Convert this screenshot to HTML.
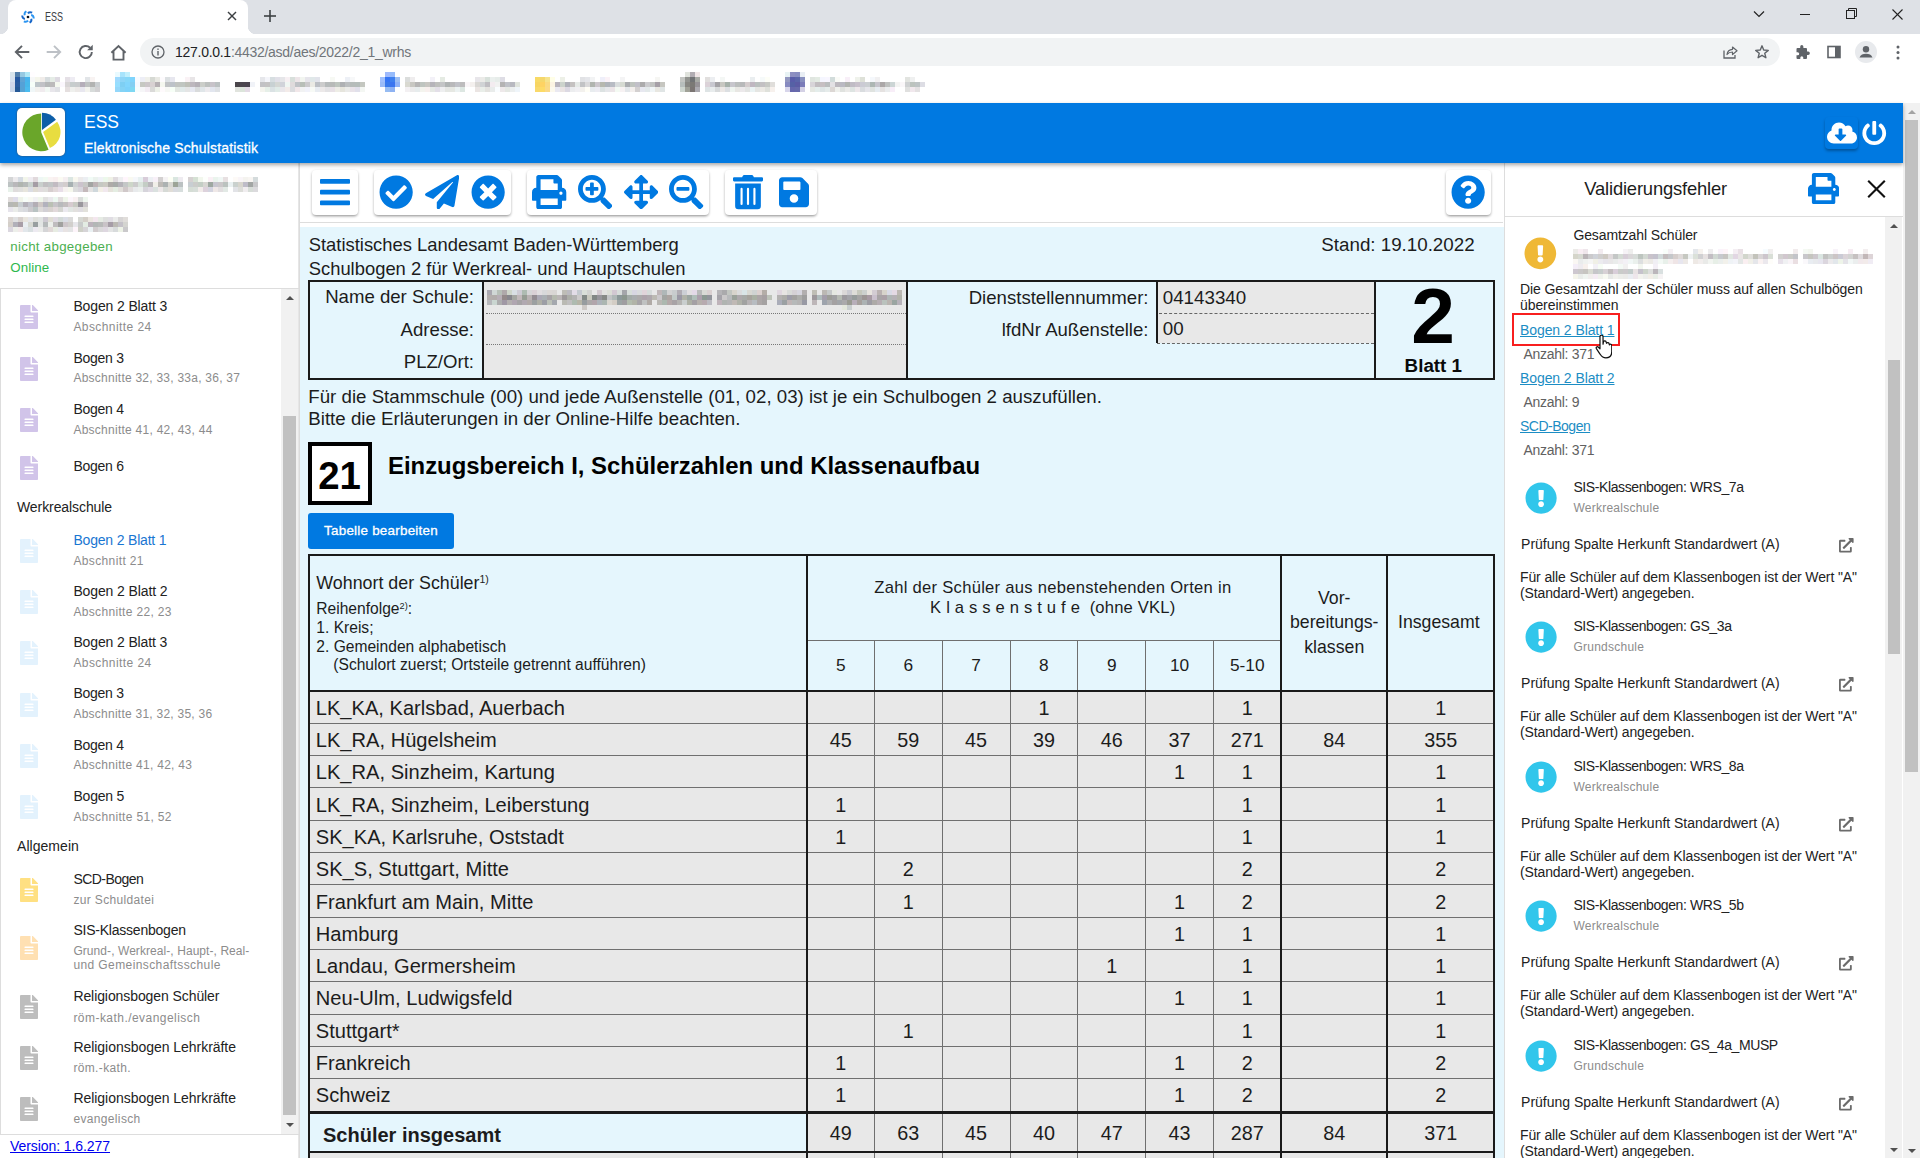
<!DOCTYPE html>
<html lang="de">
<head>
<meta charset="utf-8">
<title>ESS</title>
<style>
*{box-sizing:border-box;margin:0;padding:0}
html,body{width:1920px;height:1158px;overflow:hidden;background:#fff;font-family:"Liberation Sans",sans-serif;color:#111}
.abs{position:absolute}
svg{display:block}
/* ---------- browser chrome ---------- */
#tabstrip{left:0;top:0;width:1920px;height:34px;background:#dee1e6}
#tab{left:8px;top:0;width:240px;height:34px;background:#fff;border-radius:8px 8px 0 0}
#tab:before,#tab:after{content:"";position:absolute;bottom:0;width:8px;height:8px;background:radial-gradient(circle at 0 0,#dee1e6 8px,#fff 8.5px)}
#tab:before{left:-8px}
#tab:after{right:-8px;background:radial-gradient(circle at 100% 0,#dee1e6 8px,#fff 8.5px)}
#tabtitle{left:44.6px;top:10px;font-size:12px;color:#3c4043;transform:scaleX(.75);transform-origin:0 0}
#toolbar{left:0;top:34px;width:1920px;height:36px;background:#fff}
#urlpill{left:140px;top:38px;width:1640px;height:28px;border-radius:14px;background:#f1f3f4}
#url{left:175px;top:44px;font-size:14px;color:#70757a;white-space:nowrap;letter-spacing:-.28px}
#url b{font-weight:400;color:#202124}
#bookmarks{left:0;top:70px;width:1920px;height:33px;background:#fff}
.bm{position:absolute;top:78px;height:14px;filter:blur(1.6px);border-radius:2px}
/* ---------- app header ---------- */
#appbar{left:0;top:103px;width:1903px;height:60px;background:#0079e1;box-shadow:0 2px 4px rgba(0,0,0,.35);z-index:5}
#logo{left:17px;top:5px;width:48px;height:48px;background:#fff;border-radius:5px;box-shadow:0 0 2px rgba(90,60,40,.8)}
#apptitle{left:84px;top:9px;font-size:17.5px;color:#fff;white-space:nowrap}
#appsub{left:84px;top:36.5px;font-size:14px;color:#fff;white-space:nowrap;-webkit-text-stroke:.3px #fff;letter-spacing:.16px}
/* ---------- page scrollbar ---------- */
#pscroll{left:1903px;top:103px;width:17px;height:1055px;background:#f1f1f1}
#pscroll .thumb{left:2px;top:17px;width:13px;height:652px;background:#c1c1c1}
.arr{position:absolute;width:0;height:0;border-left:4px solid transparent;border-right:4px solid transparent}
.arr.up{border-bottom:4px solid #505050}
.arr.dn{border-top:4px solid #505050}
/* ---------- left sidebar ---------- */
#side{left:0;top:163px;width:300px;height:995px;background:#fff;border-right:1px solid #dcdcdc;box-shadow:inset -1px 0 0 #e6e6e6}
/* ---------- main ---------- */
#main{left:300px;top:163px;width:1204px;height:995px;background:#fff}
#form{left:0;top:64px;width:1204px;height:931px;background:#e5f6fd}
/* ---------- right panel ---------- */
#right{left:1504px;top:163px;width:399px;height:995px;background:#fff;border-left:1px solid #ddd}

#form .t{position:absolute;white-space:nowrap;color:#1c1c1c}
#form .b{font-weight:700}
.fld{background:#e8e8e8}
.dot{height:0;border-top:1px dotted #777}
.dash{height:0;border-top:1px dashed #666}
.blurtxt{filter:blur(2.2px);color:#555;white-space:nowrap;overflow:hidden}
.btn{background:#0079e1;color:#fff;border-radius:3px;font-size:13.4px;line-height:36px;text-align:center;-webkit-text-stroke:.3px #fff;letter-spacing:.24px}
.hl{height:1px;background:#6f6f6f}
.vl{width:1px;background:#6f6f6f}
.vk{width:2px;background:#1a1a1a}
.hk{background:#1a1a1a}
.sup{position:relative}

#side .st{position:absolute;white-space:nowrap;color:#222}
#side .sub{color:#8c8c8c}
.sblur{font-size:14px;line-height:18px;height:18px;color:#555;filter:blur(2.4px);white-space:nowrap;overflow:hidden}

#right{overflow:hidden}
#right .rt{position:absolute;white-space:nowrap;color:#222}
#right .lnk{color:#1c8dc4;text-decoration:underline}
.rblur{font-size:12px;line-height:14px;height:14px;color:#777;filter:blur(2.2px);white-space:nowrap;overflow:hidden}

.bmt{position:absolute;top:77px;height:15px;font-size:12px;line-height:15px;color:#555;filter:blur(2px);white-space:nowrap;overflow:hidden}
.tbtn{background:#fff;border-radius:4px;box-shadow:0 2px 3px -1px rgba(0,0,0,.3),0 1px 3px rgba(0,0,0,.2)}
</style>
</head>
<body>
<!-- BROWSER CHROME -->
<div id="tabstrip" class="abs"></div>
<div id="tab" class="abs"></div>
<div id="tabtitle" class="abs">ESS</div>
<div id="toolbar" class="abs"></div>
<div id="urlpill" class="abs"></div>
<div id="url" class="abs"><b>127.0.0.1</b>:4432/asd/aes/2022/2_1_wrhs</div>
<div id="bookmarks" class="abs"></div>
<svg class="abs" style="left:21px;top:10.1px" width="14" height="14" viewBox="0 0 14 14"><path d="M6.87 3.30Q8.50 1.40 11.17 2.68" fill="none" stroke="#1565c8" stroke-width="1.9"/><path d="M10.14 5.04Q12.60 5.50 12.82 8.45" fill="none" stroke="#2b95f2" stroke-width="1.9"/><path d="M10.27 8.74Q11.10 11.10 8.65 12.77" fill="none" stroke="#1565c8" stroke-width="1.9"/><path d="M7.13 10.70Q5.50 12.60 2.83 11.32" fill="none" stroke="#2b95f2" stroke-width="1.9"/><path d="M3.86 8.96Q1.40 8.50 1.18 5.55" fill="none" stroke="#1565c8" stroke-width="1.9"/><path d="M3.73 5.26Q2.90 2.90 5.35 1.23" fill="none" stroke="#2b95f2" stroke-width="1.9"/><circle cx="7" cy="7" r="1.35" fill="#0a1420"/></svg>
<svg class="abs" style="left:227px;top:11px" width="10" height="10" viewBox="0 0 10 10"><line x1="1" y1="1" x2="9" y2="9" stroke="#3c4043" stroke-width="1.4"/><line x1="9" y1="1" x2="1" y2="9" stroke="#3c4043" stroke-width="1.4"/></svg>
<svg class="abs" style="left:263px;top:9px" width="14" height="14" viewBox="0 0 14 14"><line x1="7" y1="1" x2="7" y2="13" stroke="#3c4043" stroke-width="1.6"/><line x1="1" y1="7" x2="13" y2="7" stroke="#3c4043" stroke-width="1.6"/></svg>
<svg class="abs" style="left:1753px;top:9px" width="12" height="10" viewBox="0 0 12 10"><polyline points="1,2.5 6,7.5 11,2.5" fill="none" stroke="#222" stroke-width="1.2"/></svg>
<svg class="abs" style="left:1800px;top:9px" width="10" height="10" viewBox="0 0 10 10"><line x1="0" y1="5.5" x2="10" y2="5.5" stroke="#222" stroke-width="1"/></svg>
<svg class="abs" style="left:1846px;top:8px" width="11" height="11" viewBox="0 0 11 11"><rect x="0.5" y="2.5" width="8" height="8" fill="none" stroke="#222"/><polyline points="2.5,2.5 2.5,0.5 10.5,0.5 10.5,8.5 8.5,8.5" fill="none" stroke="#222"/></svg>
<svg class="abs" style="left:1892px;top:9px" width="11" height="11" viewBox="0 0 11 11"><line x1="0.5" y1="0.5" x2="10.5" y2="10.5" stroke="#222" stroke-width="1.1"/><line x1="10.5" y1="0.5" x2="0.5" y2="10.5" stroke="#222" stroke-width="1.1"/></svg>
<svg class="abs" style="left:13px;top:43px" width="18" height="18" viewBox="0 0 16 16"><path d="M14.5 8H2.5M8 2.5L2.5 8 8 13.500" fill="none" stroke="#5f6368" stroke-width="1.7"/></svg>
<svg class="abs" style="left:45px;top:43px" width="18" height="18" viewBox="0 0 16 16"><g transform="translate(16,0) scale(-1,1)"><path d="M14.5 8H2.5M8 2.5L2.5 8 8 13.500" fill="none" stroke="#bdc1c6" stroke-width="1.7"/></g></svg>
<svg class="abs" style="left:77px;top:43px" width="18" height="18" viewBox="0 0 16 16"><path d="M13.2 8a5.400 5.400 0 1 1-1.600-3.800" fill="none" stroke="#5f6368" stroke-width="1.7"/><path d="M14 1.5v5h-5z" fill="#5f6368"/></svg>
<svg class="abs" style="left:108.5px;top:42.5px" width="19" height="19" viewBox="0 0 16 16"><path d="M2 8.200L8 2.500l6 5.700M3.800 7v7h8.400V7" fill="none" stroke="#5f6368" stroke-width="1.6"/></svg>
<svg class="abs" style="left:151px;top:45px" width="14" height="14" viewBox="0 0 14 14"><circle cx="7" cy="7" r="6" fill="none" stroke="#5f6368" stroke-width="1.3"/><rect x="6.300" y="6" width="1.400" height="4.500" fill="#5f6368"/><rect x="6.300" y="3.500" width="1.400" height="1.400" fill="#5f6368"/></svg>
<svg class="abs" style="left:1722px;top:44px" width="16" height="16" viewBox="0 0 16 16"><path d="M2 6.500v7.500h11v-3" fill="none" stroke="#5f6368" stroke-width="1.300"/><path d="M5 10.500c.5-3.500 2.500-5 5.500-5.200V3l4.500 3.800-4.500 3.800V8c-2.500 0-4 .600-5.500 2.500z" fill="none" stroke="#5f6368" stroke-width="1.200" stroke-linejoin="round"/></svg>
<svg class="abs" style="left:1754px;top:44px" width="16" height="16" viewBox="0 0 16 16"><polygon points="8.00,1.80 9.70,6.05 14.28,6.36 10.76,9.30 11.88,13.74 8.00,11.30 4.12,13.74 5.24,9.30 1.72,6.36 6.30,6.05" fill="none" stroke="#5f6368" stroke-width="1.400" stroke-linejoin="round"/></svg>
<svg class="abs" style="left:1794px;top:44px" width="16" height="16" viewBox="0 0 16 16"><path d="M6.200 2.700a1.600 1.600 0 0 1 3.200 0V4H12a1 1 0 0 1 1 1v2.600h1.200a1.650 1.650 0 0 1 0 3.300H13V14a1 1 0 0 1-1 1H9.300v-1.200a1.500 1.500 0 0 0-3 0V15H3.500a1 1 0 0 1-1-1v-2.800h1.200a1.500 1.500 0 0 0 0-3H2.500V5a1 1 0 0 1 1-1h2.700z" fill="#5f6368"/></svg>
<svg class="abs" style="left:1826px;top:44px" width="16" height="16" viewBox="0 0 16 16"><rect x="2" y="2.500" width="12" height="11" fill="none" stroke="#5f6368" stroke-width="1.600"/><rect x="9" y="2.500" width="5" height="11" fill="#5f6368"/></svg>
<svg class="abs" style="left:1855px;top:41px" width="22" height="22" viewBox="0 0 22 22"><circle cx="11" cy="11" r="11" fill="#e8eaed"/><circle cx="11" cy="8.300" r="3.200" fill="#5f6368"/><path d="M4.500 16.500c1-3 3.500-3.800 6.500-3.800s5.500.8 6.500 3.800z" fill="#5f6368"/></svg>
<svg class="abs" style="left:1895px;top:45px" width="6" height="16" viewBox="0 0 6 16"><circle cx="3" cy="2" r="1.500" fill="#5f6368"/><circle cx="3" cy="7.500" r="1.500" fill="#5f6368"/><circle cx="3" cy="13" r="1.500" fill="#5f6368"/></svg>
<!-- APP HEADER -->
<div id="appbar" class="abs">
  <div id="logo" class="abs"><svg width="48" height="48" viewBox="0 0 48 48"><path d="M24.20 24.30L31.58 41.70A18.9 18.9 0 1 1 24.20 5.40Z" fill="#6aa62a"/><path d="M25.00 21.90L25.00 4.70A17.2 17.2 0 0 1 38.92 11.79Z" fill="#0d5ea8"/><path d="M26.10 24.00L40.18 13.77A17.4 17.4 0 0 1 32.90 40.02Z" fill="#e8dd40"/></svg></div>
  <div id="apptitle" class="abs">ESS</div>
  <div id="appsub" class="abs">Elektronische Schulstatistik</div>
  <div class="abs" style="left:1825px;top:14px;width:33px;height:32px;border-radius:4px;box-shadow:0 2px 3px rgba(0,0,0,.3)"></div>
<svg class="abs" style="left:1826.50px;top:18.00px" width="30.00" height="24.00" viewBox="0 0 640 512"><path fill="#fff" d="M537.6 226.6c4.1-10.7 6.4-22.4 6.4-34.6 0-53-43-96-96-96-19.7 0-38.1 6-53.3 16.2C367 64.2 315.3 32 256 32c-88.4 0-160 71.6-160 160 0 2.7.1 5.4.2 8.1C40.2 219.8 0 273.2 0 336c0 79.5 64.5 144 144 144h368c70.7 0 128-57.3 128-128 0-61.9-44-113.6-102.4-125.4zm-132.9 88.7L299.3 420.7c-6.2 6.2-16.4 6.2-22.6 0L171.3 315.3c-10.1-10.1-2.9-27.3 11.3-27.3H248V176c0-8.8 7.2-16 16-16h48c8.8 0 16 7.2 16 16v112h65.4c14.2 0 21.4 17.2 11.3 27.3z"/></svg>
<svg class="abs" style="left:1862.25px;top:18.05px" width="24.50" height="24.50" viewBox="0 0 512 512"><path fill="#fff" d="M400 54.1c63 45 104 118.6 104 201.9 0 136.8-110.8 247.7-247.5 248C120 504.3 8.2 393 8 256.4 7.9 173.1 48.9 99.3 111.8 54.2c11.7-8.3 28-4.8 35 7.7L162.6 90c5.9 10.5 3.1 23.8-6.6 31-41.5 30.8-68 79.6-68 134.9-.1 92.3 74.5 168.1 168 168.1 91.6 0 168.6-74.2 168-169.1-.3-51.8-24.7-101.8-68.1-134-9.7-7.2-12.4-20.5-6.5-30.9l15.8-28.1c7-12.4 23.2-16.1 34.8-7.8zM296 264V24c0-13.3-10.7-24-24-24h-32c-13.3 0-24 10.7-24 24v240c0 13.3 10.7 24 24 24h32c13.3 0 24-10.7 24-24z"/></svg>
</div>
<div id="pscroll" class="abs"><div class="arr up" style="left:4.5px;top:7px;border-bottom-color:#a3a3a3"></div><div class="thumb abs"></div><div class="arr dn" style="left:4.5px;top:1046px"></div></div>
<!-- LEFT SIDEBAR -->
<div id="side" class="abs">
<div class="st" style="top:76px;font-size:13.3px;line-height:15px;letter-spacing:0.289px;left:10.30px;color:#4caf50;">nicht abgegeben</div>
<div class="st" style="top:97px;font-size:13.3px;line-height:15px;letter-spacing:0.092px;left:10.30px;color:#2db84d;">Online</div>
<div class="abs" style="left:0;top:125px;width:299px;height:847px;border:1px solid #ddd;border-right:0"></div>
<svg class="abs" style="left:19.9px;top:142.20px" width="18" height="24" viewBox="0 0 384 512"><path fill="#d1c4e9" d="M224 136V0H24C10.7 0 0 10.7 0 24v464c0 13.3 10.7 24 24 24h336c13.3 0 24-10.7 24-24V160H248c-13.2 0-24-10.8-24-24zm64 236c0 6.6-5.4 12-12 12H108c-6.6 0-12-5.4-12-12v-8c0-6.6 5.4-12 12-12h168c6.6 0 12 5.4 12 12v8zm0-64c0 6.6-5.4 12-12 12H108c-6.6 0-12-5.4-12-12v-8c0-6.6 5.4-12 12-12h168c6.6 0 12 5.4 12 12v8zm0-72v8c0 6.6-5.4 12-12 12H108c-6.6 0-12-5.4-12-12v-8c0-6.6 5.4-12 12-12h168c6.6 0 12 5.4 12 12zm96-114.1v6.100H256V0h6.100c6.400 0 12.500 2.500 17 7l97.900 98c4.500 4.500 7 10.600 7 16.900z"/></svg>
<div class="st" style="top:135px;font-size:14px;line-height:16px;letter-spacing:-0.129px;left:73.40px;">Bogen 2 Blatt 3</div>
<div class="st sub" style="top:157px;font-size:12px;line-height:14px;letter-spacing:0.422px;left:73.40px;">Abschnitte 24</div>
<svg class="abs" style="left:19.9px;top:193.70px" width="18" height="24" viewBox="0 0 384 512"><path fill="#d1c4e9" d="M224 136V0H24C10.7 0 0 10.7 0 24v464c0 13.3 10.7 24 24 24h336c13.3 0 24-10.7 24-24V160H248c-13.2 0-24-10.8-24-24zm64 236c0 6.6-5.4 12-12 12H108c-6.6 0-12-5.4-12-12v-8c0-6.6 5.4-12 12-12h168c6.6 0 12 5.4 12 12v8zm0-64c0 6.6-5.4 12-12 12H108c-6.6 0-12-5.4-12-12v-8c0-6.6 5.4-12 12-12h168c6.6 0 12 5.4 12 12v8zm0-72v8c0 6.6-5.4 12-12 12H108c-6.6 0-12-5.4-12-12v-8c0-6.6 5.4-12 12-12h168c6.6 0 12 5.4 12 12zm96-114.1v6.100H256V0h6.100c6.400 0 12.500 2.500 17 7l97.900 98c4.500 4.500 7 10.600 7 16.900z"/></svg>
<div class="st" style="top:187px;font-size:14px;line-height:16px;letter-spacing:-0.251px;left:73.40px;">Bogen 3</div>
<div class="st sub" style="top:208px;font-size:12px;line-height:14px;letter-spacing:0.245px;left:73.40px;">Abschnitte 32, 33, 33a, 36, 37</div>
<svg class="abs" style="left:19.9px;top:245.20px" width="18" height="24" viewBox="0 0 384 512"><path fill="#d1c4e9" d="M224 136V0H24C10.7 0 0 10.7 0 24v464c0 13.3 10.7 24 24 24h336c13.3 0 24-10.7 24-24V160H248c-13.2 0-24-10.8-24-24zm64 236c0 6.6-5.4 12-12 12H108c-6.6 0-12-5.4-12-12v-8c0-6.6 5.4-12 12-12h168c6.6 0 12 5.4 12 12v8zm0-64c0 6.6-5.4 12-12 12H108c-6.6 0-12-5.4-12-12v-8c0-6.6 5.4-12 12-12h168c6.6 0 12 5.4 12 12v8zm0-72v8c0 6.6-5.4 12-12 12H108c-6.6 0-12-5.4-12-12v-8c0-6.6 5.4-12 12-12h168c6.6 0 12 5.4 12 12zm96-114.1v6.100H256V0h6.100c6.400 0 12.500 2.500 17 7l97.900 98c4.500 4.500 7 10.600 7 16.900z"/></svg>
<div class="st" style="top:238px;font-size:14px;line-height:16px;letter-spacing:-0.251px;left:73.40px;">Bogen 4</div>
<div class="st sub" style="top:260px;font-size:12px;line-height:14px;letter-spacing:0.258px;left:73.40px;">Abschnitte 41, 42, 43, 44</div>
<svg class="abs" style="left:19.9px;top:293.40px" width="18" height="24" viewBox="0 0 384 512"><path fill="#d1c4e9" d="M224 136V0H24C10.7 0 0 10.7 0 24v464c0 13.3 10.7 24 24 24h336c13.3 0 24-10.7 24-24V160H248c-13.2 0-24-10.8-24-24zm64 236c0 6.6-5.4 12-12 12H108c-6.6 0-12-5.4-12-12v-8c0-6.6 5.4-12 12-12h168c6.6 0 12 5.4 12 12v8zm0-64c0 6.6-5.4 12-12 12H108c-6.6 0-12-5.4-12-12v-8c0-6.6 5.4-12 12-12h168c6.6 0 12 5.4 12 12v8zm0-72v8c0 6.6-5.4 12-12 12H108c-6.6 0-12-5.4-12-12v-8c0-6.6 5.4-12 12-12h168c6.6 0 12 5.4 12 12zm96-114.1v6.100H256V0h6.100c6.400 0 12.500 2.500 17 7l97.900 98c4.500 4.500 7 10.600 7 16.900z"/></svg>
<div class="st" style="top:295px;font-size:14px;line-height:16px;letter-spacing:-0.251px;left:73.40px;">Bogen 6</div>
<svg class="abs" style="left:19.9px;top:376.20px" width="18" height="24" viewBox="0 0 384 512"><path fill="#e3f2fd" d="M224 136V0H24C10.7 0 0 10.7 0 24v464c0 13.3 10.7 24 24 24h336c13.3 0 24-10.7 24-24V160H248c-13.2 0-24-10.8-24-24zm64 236c0 6.6-5.4 12-12 12H108c-6.6 0-12-5.4-12-12v-8c0-6.6 5.4-12 12-12h168c6.6 0 12 5.4 12 12v8zm0-64c0 6.6-5.4 12-12 12H108c-6.6 0-12-5.4-12-12v-8c0-6.6 5.4-12 12-12h168c6.6 0 12 5.4 12 12v8zm0-72v8c0 6.6-5.4 12-12 12H108c-6.6 0-12-5.4-12-12v-8c0-6.6 5.4-12 12-12h168c6.6 0 12 5.4 12 12zm96-114.1v6.100H256V0h6.100c6.400 0 12.500 2.500 17 7l97.900 98c4.500 4.500 7 10.600 7 16.900z"/></svg>
<div class="st" style="top:369px;font-size:14px;line-height:16px;letter-spacing:-0.183px;left:73.40px;color:#1976d2;">Bogen 2 Blatt 1</div>
<div class="st sub" style="top:391px;font-size:12px;line-height:14px;letter-spacing:0.372px;left:73.40px;">Abschnitt 21</div>
<svg class="abs" style="left:19.9px;top:427.20px" width="18" height="24" viewBox="0 0 384 512"><path fill="#e3f2fd" d="M224 136V0H24C10.7 0 0 10.7 0 24v464c0 13.3 10.7 24 24 24h336c13.3 0 24-10.7 24-24V160H248c-13.2 0-24-10.8-24-24zm64 236c0 6.6-5.4 12-12 12H108c-6.6 0-12-5.4-12-12v-8c0-6.6 5.4-12 12-12h168c6.6 0 12 5.4 12 12v8zm0-64c0 6.6-5.4 12-12 12H108c-6.6 0-12-5.4-12-12v-8c0-6.6 5.4-12 12-12h168c6.6 0 12 5.4 12 12v8zm0-72v8c0 6.6-5.4 12-12 12H108c-6.6 0-12-5.4-12-12v-8c0-6.6 5.4-12 12-12h168c6.6 0 12 5.4 12 12zm96-114.1v6.100H256V0h6.100c6.400 0 12.500 2.500 17 7l97.900 98c4.500 4.500 7 10.600 7 16.900z"/></svg>
<div class="st" style="top:420px;font-size:14px;line-height:16px;letter-spacing:-0.116px;left:73.40px;">Bogen 2 Blatt 2</div>
<div class="st sub" style="top:442px;font-size:12px;line-height:14px;letter-spacing:0.333px;left:73.40px;">Abschnitte 22, 23</div>
<svg class="abs" style="left:19.9px;top:478.20px" width="18" height="24" viewBox="0 0 384 512"><path fill="#e3f2fd" d="M224 136V0H24C10.7 0 0 10.7 0 24v464c0 13.3 10.7 24 24 24h336c13.3 0 24-10.7 24-24V160H248c-13.2 0-24-10.8-24-24zm64 236c0 6.6-5.4 12-12 12H108c-6.6 0-12-5.4-12-12v-8c0-6.6 5.4-12 12-12h168c6.6 0 12 5.4 12 12v8zm0-64c0 6.6-5.4 12-12 12H108c-6.6 0-12-5.4-12-12v-8c0-6.6 5.4-12 12-12h168c6.6 0 12 5.4 12 12v8zm0-72v8c0 6.6-5.4 12-12 12H108c-6.6 0-12-5.4-12-12v-8c0-6.6 5.4-12 12-12h168c6.6 0 12 5.4 12 12zm96-114.1v6.100H256V0h6.100c6.400 0 12.500 2.500 17 7l97.900 98c4.500 4.500 7 10.600 7 16.900z"/></svg>
<div class="st" style="top:471px;font-size:14px;line-height:16px;letter-spacing:-0.129px;left:73.40px;">Bogen 2 Blatt 3</div>
<div class="st sub" style="top:493px;font-size:12px;line-height:14px;letter-spacing:0.422px;left:73.40px;">Abschnitte 24</div>
<svg class="abs" style="left:19.9px;top:529.50px" width="18" height="24" viewBox="0 0 384 512"><path fill="#e3f2fd" d="M224 136V0H24C10.7 0 0 10.7 0 24v464c0 13.3 10.7 24 24 24h336c13.3 0 24-10.7 24-24V160H248c-13.2 0-24-10.8-24-24zm64 236c0 6.6-5.4 12-12 12H108c-6.6 0-12-5.4-12-12v-8c0-6.6 5.4-12 12-12h168c6.6 0 12 5.4 12 12v8zm0-64c0 6.6-5.4 12-12 12H108c-6.6 0-12-5.4-12-12v-8c0-6.6 5.4-12 12-12h168c6.6 0 12 5.4 12 12v8zm0-72v8c0 6.6-5.4 12-12 12H108c-6.6 0-12-5.4-12-12v-8c0-6.6 5.4-12 12-12h168c6.6 0 12 5.4 12 12zm96-114.1v6.100H256V0h6.100c6.400 0 12.500 2.500 17 7l97.900 98c4.500 4.500 7 10.600 7 16.900z"/></svg>
<div class="st" style="top:522px;font-size:14px;line-height:16px;letter-spacing:-0.251px;left:73.40px;">Bogen 3</div>
<div class="st sub" style="top:544px;font-size:12px;line-height:14px;letter-spacing:0.246px;left:73.40px;">Abschnitte 31, 32, 35, 36</div>
<svg class="abs" style="left:19.9px;top:580.70px" width="18" height="24" viewBox="0 0 384 512"><path fill="#e3f2fd" d="M224 136V0H24C10.7 0 0 10.7 0 24v464c0 13.3 10.7 24 24 24h336c13.3 0 24-10.7 24-24V160H248c-13.2 0-24-10.8-24-24zm64 236c0 6.6-5.4 12-12 12H108c-6.6 0-12-5.4-12-12v-8c0-6.6 5.4-12 12-12h168c6.6 0 12 5.4 12 12v8zm0-64c0 6.6-5.4 12-12 12H108c-6.6 0-12-5.4-12-12v-8c0-6.6 5.4-12 12-12h168c6.6 0 12 5.4 12 12v8zm0-72v8c0 6.6-5.4 12-12 12H108c-6.6 0-12-5.4-12-12v-8c0-6.6 5.4-12 12-12h168c6.6 0 12 5.4 12 12zm96-114.1v6.100H256V0h6.100c6.400 0 12.500 2.500 17 7l97.900 98c4.500 4.500 7 10.600 7 16.900z"/></svg>
<div class="st" style="top:574px;font-size:14px;line-height:16px;letter-spacing:-0.251px;left:73.40px;">Bogen 4</div>
<div class="st sub" style="top:595px;font-size:12px;line-height:14px;letter-spacing:0.293px;left:73.40px;">Abschnitte 41, 42, 43</div>
<svg class="abs" style="left:19.9px;top:631.90px" width="18" height="24" viewBox="0 0 384 512"><path fill="#e3f2fd" d="M224 136V0H24C10.7 0 0 10.7 0 24v464c0 13.3 10.7 24 24 24h336c13.3 0 24-10.7 24-24V160H248c-13.2 0-24-10.8-24-24zm64 236c0 6.6-5.4 12-12 12H108c-6.6 0-12-5.4-12-12v-8c0-6.6 5.4-12 12-12h168c6.6 0 12 5.4 12 12v8zm0-64c0 6.6-5.4 12-12 12H108c-6.6 0-12-5.4-12-12v-8c0-6.6 5.4-12 12-12h168c6.6 0 12 5.4 12 12v8zm0-72v8c0 6.6-5.4 12-12 12H108c-6.6 0-12-5.4-12-12v-8c0-6.6 5.4-12 12-12h168c6.6 0 12 5.4 12 12zm96-114.1v6.100H256V0h6.100c6.400 0 12.500 2.500 17 7l97.900 98c4.500 4.500 7 10.600 7 16.900z"/></svg>
<div class="st" style="top:625px;font-size:14px;line-height:16px;letter-spacing:-0.194px;left:73.40px;">Bogen 5</div>
<div class="st sub" style="top:647px;font-size:12px;line-height:14px;letter-spacing:0.333px;left:73.40px;">Abschnitte 51, 52</div>
<svg class="abs" style="left:19.9px;top:714.80px" width="18" height="24" viewBox="0 0 384 512"><path fill="#ffe082" d="M224 136V0H24C10.7 0 0 10.7 0 24v464c0 13.3 10.7 24 24 24h336c13.3 0 24-10.7 24-24V160H248c-13.2 0-24-10.8-24-24zm64 236c0 6.6-5.4 12-12 12H108c-6.6 0-12-5.4-12-12v-8c0-6.6 5.4-12 12-12h168c6.6 0 12 5.4 12 12v8zm0-64c0 6.6-5.4 12-12 12H108c-6.6 0-12-5.4-12-12v-8c0-6.6 5.4-12 12-12h168c6.6 0 12 5.4 12 12v8zm0-72v8c0 6.6-5.4 12-12 12H108c-6.6 0-12-5.4-12-12v-8c0-6.6 5.4-12 12-12h168c6.6 0 12 5.4 12 12zm96-114.1v6.100H256V0h6.100c6.400 0 12.500 2.500 17 7l97.900 98c4.500 4.500 7 10.600 7 16.900z"/></svg>
<div class="st" style="top:708px;font-size:14px;line-height:16px;letter-spacing:-0.545px;left:73.40px;">SCD-Bogen</div>
<div class="st sub" style="top:730px;font-size:12px;line-height:14px;letter-spacing:0.347px;left:73.40px;">zur Schuldatei</div>
<svg class="abs" style="left:19.9px;top:772.90px" width="18" height="24" viewBox="0 0 384 512"><path fill="#ffe0b2" d="M224 136V0H24C10.7 0 0 10.7 0 24v464c0 13.3 10.7 24 24 24h336c13.3 0 24-10.7 24-24V160H248c-13.2 0-24-10.8-24-24zm64 236c0 6.6-5.4 12-12 12H108c-6.6 0-12-5.4-12-12v-8c0-6.6 5.4-12 12-12h168c6.6 0 12 5.4 12 12v8zm0-64c0 6.6-5.4 12-12 12H108c-6.6 0-12-5.4-12-12v-8c0-6.6 5.4-12 12-12h168c6.6 0 12 5.4 12 12v8zm0-72v8c0 6.6-5.4 12-12 12H108c-6.6 0-12-5.4-12-12v-8c0-6.6 5.4-12 12-12h168c6.6 0 12 5.4 12 12zm96-114.1v6.100H256V0h6.100c6.400 0 12.500 2.500 17 7l97.900 98c4.500 4.500 7 10.600 7 16.900z"/></svg>
<div class="st" style="top:759px;font-size:14px;line-height:16px;letter-spacing:-0.223px;left:73.40px;">SIS-Klassenbogen</div>
<div class="st sub" style="top:781px;font-size:12px;line-height:14px;letter-spacing:0.068px;left:73.40px;">Grund-, Werkreal-, Haupt-, Real-</div>
<div class="st sub" style="top:795px;font-size:12px;line-height:14px;letter-spacing:0.405px;left:73.40px;">und Gemeinschaftsschule</div>
<svg class="abs" style="left:19.9px;top:832.20px" width="18" height="24" viewBox="0 0 384 512"><path fill="#bdbdbd" d="M224 136V0H24C10.7 0 0 10.7 0 24v464c0 13.3 10.7 24 24 24h336c13.3 0 24-10.7 24-24V160H248c-13.2 0-24-10.8-24-24zm64 236c0 6.6-5.4 12-12 12H108c-6.6 0-12-5.4-12-12v-8c0-6.6 5.4-12 12-12h168c6.6 0 12 5.4 12 12v8zm0-64c0 6.6-5.4 12-12 12H108c-6.6 0-12-5.4-12-12v-8c0-6.6 5.4-12 12-12h168c6.6 0 12 5.4 12 12v8zm0-72v8c0 6.6-5.4 12-12 12H108c-6.6 0-12-5.4-12-12v-8c0-6.6 5.4-12 12-12h168c6.6 0 12 5.4 12 12zm96-114.1v6.100H256V0h6.100c6.400 0 12.500 2.500 17 7l97.900 98c4.500 4.500 7 10.600 7 16.900z"/></svg>
<div class="st" style="top:825px;font-size:14px;line-height:16px;letter-spacing:-0.085px;left:73.40px;">Religionsbogen Schüler</div>
<div class="st sub" style="top:848px;font-size:12px;line-height:14px;letter-spacing:0.458px;left:73.40px;">röm-kath./evangelisch</div>
<svg class="abs" style="left:19.9px;top:883.30px" width="18" height="24" viewBox="0 0 384 512"><path fill="#bdbdbd" d="M224 136V0H24C10.7 0 0 10.7 0 24v464c0 13.3 10.7 24 24 24h336c13.3 0 24-10.7 24-24V160H248c-13.2 0-24-10.8-24-24zm64 236c0 6.6-5.4 12-12 12H108c-6.6 0-12-5.4-12-12v-8c0-6.6 5.4-12 12-12h168c6.6 0 12 5.4 12 12v8zm0-64c0 6.6-5.4 12-12 12H108c-6.6 0-12-5.4-12-12v-8c0-6.6 5.4-12 12-12h168c6.6 0 12 5.4 12 12v8zm0-72v8c0 6.6-5.4 12-12 12H108c-6.6 0-12-5.4-12-12v-8c0-6.6 5.4-12 12-12h168c6.6 0 12 5.4 12 12zm96-114.1v6.100H256V0h6.100c6.400 0 12.500 2.500 17 7l97.900 98c4.500 4.500 7 10.600 7 16.900z"/></svg>
<div class="st" style="top:876px;font-size:14px;line-height:16px;letter-spacing:-0.034px;left:73.40px;">Religionsbogen Lehrkräfte</div>
<div class="st sub" style="top:898px;font-size:12px;line-height:14px;letter-spacing:0.349px;left:73.40px;">röm.-kath.</div>
<svg class="abs" style="left:19.9px;top:934.40px" width="18" height="24" viewBox="0 0 384 512"><path fill="#bdbdbd" d="M224 136V0H24C10.7 0 0 10.7 0 24v464c0 13.3 10.7 24 24 24h336c13.3 0 24-10.7 24-24V160H248c-13.2 0-24-10.8-24-24zm64 236c0 6.6-5.4 12-12 12H108c-6.6 0-12-5.4-12-12v-8c0-6.6 5.4-12 12-12h168c6.6 0 12 5.4 12 12v8zm0-64c0 6.6-5.4 12-12 12H108c-6.6 0-12-5.4-12-12v-8c0-6.6 5.4-12 12-12h168c6.6 0 12 5.4 12 12v8zm0-72v8c0 6.6-5.4 12-12 12H108c-6.6 0-12-5.4-12-12v-8c0-6.6 5.4-12 12-12h168c6.6 0 12 5.4 12 12zm96-114.1v6.100H256V0h6.100c6.400 0 12.500 2.500 17 7l97.900 98c4.500 4.500 7 10.600 7 16.900z"/></svg>
<div class="st" style="top:927px;font-size:14px;line-height:16px;letter-spacing:-0.034px;left:73.40px;">Religionsbogen Lehrkräfte</div>
<div class="st sub" style="top:949px;font-size:12px;line-height:14px;letter-spacing:0.348px;left:73.40px;">evangelisch</div>
<div class="st" style="top:336px;font-size:14px;line-height:16px;letter-spacing:-0.087px;left:17.00px;">Werkrealschule</div>
<div class="st" style="top:675px;font-size:14px;line-height:16px;letter-spacing:0.047px;left:17.00px;">Allgemein</div>
<div class="abs" style="left:281px;top:126px;width:17px;height:845px;background:#f1f1f1"></div>
<div class="arr up" style="left:285.5px;top:133px"></div>
<div class="arr dn" style="left:285.5px;top:960px"></div>
<div class="abs" style="left:283px;top:253px;width:13px;height:699px;background:#c1c1c1"></div>
<div class="st" style="top:975px;font-size:14px;line-height:16px;letter-spacing:-0.074px;left:10.00px;color:#0000ee;text-decoration:underline;">Version: 1.6.277</div>
</div>
<!-- MAIN -->
<div id="main" class="abs">
<div class="abs" style="left:0;top:59px;width:1203px;height:1px;background:#ddd"></div>
<div class="abs tbtn" style="left:12px;top:7px;width:46px;height:45px"></div>
<div class="abs tbtn" style="left:74px;top:7px;width:137px;height:45px"></div>
<div class="abs tbtn" style="left:227px;top:7px;width:182px;height:45px"></div>
<div class="abs tbtn" style="left:425px;top:7px;width:92px;height:45px"></div>
<div class="abs tbtn" style="left:1145.5px;top:7px;width:45.0px;height:45px"></div>
<svg class="abs" style="left:19.99px;top:11.85px" width="30.01" height="34.30" viewBox="0 0 448 512"><path fill="#0079e1" d="M16 132h416c8.837 0 16-7.163 16-16V76c0-8.837-7.163-16-16-16H16C7.163 60 0 67.163 0 76v40c0 8.837 7.163 16 16 16zm0 160h416c8.837 0 16-7.163 16-16v-40c0-8.837-7.163-16-16-16H16c-8.837 0-16 7.163-16 16v40c0 8.837 7.163 16 16 16zm0 160h416c8.837 0 16-7.163 16-16v-40c0-8.837-7.163-16-16-16H16c-8.837 0-16 7.163-16 16v40c0 8.837 7.163 16 16 16z"/></svg>
<svg class="abs" style="left:79.25px;top:11.85px" width="34.30" height="34.30" viewBox="0 0 512 512"><path fill="#0079e1" d="M504 256c0 136.967-111.033 248-248 248S8 392.967 8 256 119.033 8 256 8s248 111.033 248 248zM227.314 387.314l184-184c6.248-6.248 6.248-16.379 0-22.627l-22.627-22.627c-6.248-6.249-16.379-6.249-22.628 0L216 308.118l-70.059-70.059c-6.248-6.248-16.379-6.248-22.628 0l-22.627 22.627c-6.248 6.248-6.248 16.379 0 22.627l104 104c6.249 6.249 16.379 6.249 22.628.001z"/></svg>
<svg class="abs" style="left:125.05px;top:12.05px" width="34.30" height="34.30" viewBox="0 0 512 512"><path fill="#0079e1" d="M476 3.2L12.5 270.6c-18.1 10.4-15.8 35.6 2.2 43.2L121 358.4l287.3-253.2c5.5-4.9 13.3 2.6 8.6 8.3L176 407v80.5c0 23.6 28.5 32.9 42.5 15.8L282 426l124.6 52.2c14.2 6 30.4-2.9 33-18.2l72-432C515 7.8 493.3-6.8 476 3.2z"/></svg>
<svg class="abs" style="left:170.85px;top:11.85px" width="34.30" height="34.30" viewBox="0 0 512 512"><path fill="#0079e1" d="M256 8C119 8 8 119 8 256s111 248 248 248 248-111 248-248S393 8 256 8zm121.6 313.1c4.7 4.7 4.7 12.3 0 17L338 377.6c-4.7 4.7-12.3 4.7-17 0L256 312l-65.1 65.6c-4.7 4.7-12.3 4.7-17 0L134.4 338c-4.7-4.7-4.7-12.3 0-17l65.6-65-65.6-65.1c-4.7-4.7-4.7-12.3 0-17l39.600-39.600c4.7-4.7 12.3-4.7 17 0l65 65.7 65.1-65.600c4.7-4.7 12.3-4.7 17 0l39.600 39.600c4.7 4.7 4.7 12.3 0 17L312 256l65.600 65.100z"/></svg>
<svg class="abs" style="left:232.35px;top:11.85px" width="34.30" height="34.30" viewBox="0 0 512 512"><path fill="#0079e1" d="M448 192V77.25c0-8.49-3.37-16.62-9.37-22.63L393.370 9.370c-6-6-14.140-9.370-22.630-9.370H96C78.330 0 64 14.330 64 32v160c-35.350 0-64 28.650-64 64v112c0 8.840 7.160 16 16 16h48v96c0 17.670 14.330 32 32 32h320c17.670 0 32-14.330 32-32v-96h48c8.840 0 16-7.160 16-16V256c0-35.350-28.650-64-64-64zm-64 256H128v-96h256v96zm0-224H128V64h192v48c0 8.840 7.160 16 16 16h48v96zm48 72c-13.250 0-24-10.750-24-24 0-13.260 10.750-24 24-24s24 10.740 24 24c0 13.250-10.750 24-24 24z"/></svg>
<svg class="abs" style="left:277.65px;top:11.85px" width="34.30" height="34.30" viewBox="0 0 512 512"><path fill="#0079e1" d="M304 192v32c0 6.6-5.4 12-12 12h-56v56c0 6.6-5.4 12-12 12h-32c-6.6 0-12-5.4-12-12v-56h-56c-6.6 0-12-5.4-12-12v-32c0-6.6 5.4-12 12-12h56v-56c0-6.6 5.4-12 12-12h32c6.6 0 12 5.4 12 12v56h56c6.6 0 12 5.4 12 12zm201 284.7L476.7 505c-9.4 9.4-24.6 9.4-33.9 0L343 405.3c-4.5-4.5-7-10.6-7-17V372c-35.3 27.6-79.7 44-128 44C93.1 416 0 322.9 0 208S93.1 0 208 0s208 93.1 208 208c0 48.3-16.4 92.7-44 128h16.3c6.4 0 12.5 2.5 17 7l99.7 99.7c9.3 9.4 9.3 24.6 0 34zM344 208c0-75.2-60.8-136-136-136S72 132.8 72 208s60.800 136 136 136 136-60.800 136-136z"/></svg>
<svg class="abs" style="left:323.85px;top:11.85px" width="34.30" height="34.30" viewBox="0 0 512 512"><path fill="#0079e1" d="M352.201 425.775l-79.196 79.196c-9.373 9.373-24.568 9.373-33.941 0l-79.196-79.196c-15.119-15.119-4.411-40.971 16.971-40.970h51.162L228 284H127.196v51.162c0 21.382-25.851 32.090-40.971 16.971L7.029 272.937c-9.373-9.373-9.373-24.569 0-33.941L86.225 159.800c15.119-15.119 40.971-4.411 40.971 16.971V228H228V127.196h-51.230c-21.382 0-32.090-25.851-16.971-40.971l79.196-79.196c9.373-9.373 24.568-9.373 33.941 0l79.196 79.196c15.119 15.119 4.411 40.971-16.971 40.971h-51.162V228h100.804v-51.162c0-21.382 25.851-32.090 40.970-16.971l79.196 79.196c9.373 9.373 9.373 24.569 0 33.941L425.773 352.200c-15.119 15.119-40.971 4.411-40.970-16.971V284H284v100.804h51.230c21.382 0 32.090 25.851 16.971 40.971z"/></svg>
<svg class="abs" style="left:369.25px;top:11.85px" width="34.30" height="34.30" viewBox="0 0 512 512"><path fill="#0079e1" d="M304 192v32c0 6.6-5.4 12-12 12H124c-6.6 0-12-5.4-12-12v-32c0-6.6 5.4-12 12-12h168c6.6 0 12 5.4 12 12zm201 284.7L476.7 505c-9.4 9.4-24.6 9.4-33.9 0L343 405.3c-4.5-4.5-7-10.6-7-17V372c-35.3 27.6-79.7 44-128 44C93.1 416 0 322.9 0 208S93.1 0 208 0s208 93.1 208 208c0 48.3-16.4 92.7-44 128h16.3c6.4 0 12.5 2.5 17 7l99.7 99.7c9.3 9.4 9.3 24.6 0 34zM344 208c0-75.2-60.8-136-136-136S72 132.8 72 208s60.800 136 136 136 136-60.800 136-136z"/></svg>
<svg class="abs" style="left:432.99px;top:12.25px" width="30.01" height="34.30" viewBox="0 0 448 512"><path fill="#0079e1" d="M32 464a48 48 0 0 0 48 48h288a48 48 0 0 0 48-48V128H32zm272-256a16 16 0 0 1 32 0v224a16 16 0 0 1-32 0zm-96 0a16 16 0 0 1 32 0v224a16 16 0 0 1-32 0zm-96 0a16 16 0 0 1 32 0v224a16 16 0 0 1-32 0zM432 32H312l-9.4-18.7A24 24 0 0 0 281.1 0H166.8a23.72 23.72 0 0 0-21.4 13.3L136 32H16A16 16 0 0 0 0 48v32a16 16 0 0 0 16 16h416a16 16 0 0 0 16-16V48a16 16 0 0 0-16-16z"/></svg>
<svg class="abs" style="left:478.99px;top:12.25px" width="30.01" height="34.30" viewBox="0 0 448 512"><path fill="#0079e1" d="M433.941 129.941l-83.882-83.882A48 48 0 0 0 316.118 32H48C21.49 32 0 53.49 0 80v352c0 26.51 21.49 48 48 48h352c26.51 0 48-21.49 48-48V163.882a48 48 0 0 0-14.059-33.941zM224 416c-35.346 0-64-28.654-64-64 0-35.346 28.654-64 64-64s64 28.654 64 64c0 35.346-28.654 64-64 64zm96-304.52V212c0 6.627-5.373 12-12 12H76c-6.627 0-12-5.373-12-12V108c0-6.627 5.373-12 12-12h228.52c3.183 0 6.235 1.264 8.485 3.515l3.48 3.48A11.996 11.996 0 0 1 320 111.48z"/></svg>
<svg class="abs" style="left:1150.85px;top:11.85px" width="34.30" height="34.30" viewBox="0 0 512 512"><path fill="#0079e1" d="M504 256c0 136.997-111.043 248-248 248S8 392.997 8 256C8 119.083 119.043 8 256 8s248 111.083 248 248zM262.655 90c-54.497 0-89.255 22.957-116.549 63.758-3.536 5.286-2.353 12.415 2.715 16.258l34.699 26.31c5.205 3.947 12.621 3.008 16.665-2.122 17.864-22.658 30.113-35.797 57.303-35.797 20.429 0 45.698 13.148 45.698 32.958 0 14.976-12.363 22.667-32.534 33.976C247.128 238.528 216 254.941 216 296v4c0 6.627 5.373 12 12 12h56c6.627 0 12-5.373 12-12v-1.333c0-28.462 83.186-29.647 83.186-106.667 0-58.002-60.165-102-116.531-102zM256 338c-25.365 0-46 20.635-46 46 0 25.364 20.635 46 46 46s46-20.636 46-46c0-25.365-20.635-46-46-46z"/></svg>
<div id="form" class="abs">
<div class="t" style="top:7px;font-size:18.4px;line-height:21px;left:8.70px;">Statistisches Landesamt Baden-Württemberg</div>
<div class="t" style="top:31px;font-size:18.4px;line-height:21px;left:8.70px;">Schulbogen 2 für Werkreal- und Hauptschulen</div>
<div class="t" style="top:7px;font-size:18.8px;line-height:21px;letter-spacing:-0.016px;left:574.58px;width:600px;text-align:right;">Stand: 19.10.2022</div>
<div class="abs" style="left:8px;top:53px;width:1187px;height:100px;border:2px solid #1a1a1a"></div>
<div class="abs" style="left:182px;top:55px;width:2px;height:97px;background:#1a1a1a"></div>
<div class="abs" style="left:606px;top:55px;width:2px;height:97px;background:#1a1a1a"></div>
<div class="abs" style="left:1074px;top:55px;width:2px;height:97px;background:#1a1a1a"></div>
<div class="abs fld" style="left:184px;top:55px;width:422px;height:96px"></div>
<div class="abs dot" style="left:186px;top:86px;width:420px"></div>
<div class="abs dot" style="left:186px;top:117px;width:420px"></div>
<div class="abs fld" style="left:856px;top:55px;width:218px;height:61px;border-left:2px solid #1a1a1a"></div>
<div class="abs dash" style="left:859px;top:86px;width:215px"></div>
<div class="abs dash" style="left:857px;top:116px;width:217px"></div>
<div class="t" style="top:59px;font-size:18.6px;line-height:21px;left:-426.00px;width:600px;text-align:right;">Name der Schule:</div>
<div class="t" style="top:92px;font-size:18.6px;line-height:21px;left:-426.00px;width:600px;text-align:right;">Adresse:</div>
<div class="t" style="top:124px;font-size:18.6px;line-height:21px;left:-426.00px;width:600px;text-align:right;">PLZ/Ort:</div>
<div class="t" style="top:60px;font-size:18.6px;line-height:21px;left:248.50px;width:600px;text-align:right;">Dienststellennummer:</div>
<div class="t" style="top:92px;font-size:18.6px;line-height:21px;left:248.50px;width:600px;text-align:right;">lfdNr Außenstelle:</div>
<div class="t" style="top:60px;font-size:18.8px;line-height:21px;left:862.70px;">04143340</div>
<div class="t" style="top:91px;font-size:18.8px;line-height:21px;left:862.70px;">00</div>
<div class="t  b" style="top:45px;font-size:78.5px;line-height:88px;left:833.00px;width:600px;text-align:center;color:#000;">2</div>
<div class="t  b" style="top:128px;font-size:18.8px;line-height:21px;left:833.30px;width:600px;text-align:center;color:#0a0a0a;">Blatt 1</div>
<div class="t" style="top:159px;font-size:18.7px;line-height:21px;left:8.30px;">Für die Stammschule (00) und jede Außenstelle (01, 02, 03) ist je ein Schulbogen 2 auszufüllen.</div>
<div class="t" style="top:181px;font-size:18.7px;line-height:21px;left:8.30px;">Bitte die Erläuterungen in der Online-Hilfe beachten.</div>
<div class="abs" style="left:8px;top:215px;width:64px;height:63px;border:4px solid #000;background:#fff"></div>
<div class="t  b" style="top:227px;font-size:38.4px;line-height:43px;left:-260.50px;width:600px;text-align:center;color:#000;">21</div>
<div class="t  b" style="top:225px;font-size:23.9px;line-height:27px;left:88.00px;color:#000;">Einzugsbereich I, Schülerzahlen und Klassenaufbau</div>
<div class="abs btn" style="left:8px;top:286px;width:146px;height:36px;">Tabelle bearbeiten</div>
<div class="abs" style="left:8px;top:464.0px;width:1187.3px;height:467.0px;background:#e8e8e8"></div>
<div class="abs" style="left:8px;top:885.5px;width:499.3px;height:40px;background:#e5f6fd"></div>
<div class="abs hl" style="left:8px;top:495.8px;width:1187.3px"></div>
<div class="abs hl" style="left:8px;top:528.1px;width:1187.3px"></div>
<div class="abs hl" style="left:8px;top:560.4px;width:1187.3px"></div>
<div class="abs hl" style="left:8px;top:592.7px;width:1187.3px"></div>
<div class="abs hl" style="left:8px;top:625.0px;width:1187.3px"></div>
<div class="abs hl" style="left:8px;top:657.3px;width:1187.3px"></div>
<div class="abs hl" style="left:8px;top:689.6px;width:1187.3px"></div>
<div class="abs hl" style="left:8px;top:721.9px;width:1187.3px"></div>
<div class="abs hl" style="left:8px;top:754.2px;width:1187.3px"></div>
<div class="abs hl" style="left:8px;top:786.5px;width:1187.3px"></div>
<div class="abs hl" style="left:8px;top:818.8px;width:1187.3px"></div>
<div class="abs hl" style="left:8px;top:851.1px;width:1187.3px"></div>
<div class="abs hl" style="left:507.3px;top:412.8px;width:473.9px"></div>
<div class="abs vl" style="left:573.9px;top:413.3px;height:517.7px"></div>
<div class="abs vl" style="left:641.7px;top:413.3px;height:517.7px"></div>
<div class="abs vl" style="left:709.5px;top:413.3px;height:517.7px"></div>
<div class="abs vl" style="left:777.3px;top:413.3px;height:517.7px"></div>
<div class="abs vl" style="left:845.1px;top:413.3px;height:517.7px"></div>
<div class="abs vl" style="left:912.9px;top:413.3px;height:517.7px"></div>
<div class="abs vk" style="left:8.0px;top:327px;height:604px"></div>
<div class="abs vk" style="left:506.3px;top:327px;height:604px"></div>
<div class="abs vk" style="left:980.2px;top:327px;height:604px"></div>
<div class="abs vk" style="left:1086.3px;top:327px;height:604px"></div>
<div class="abs vk" style="left:1193.3px;top:327px;height:604px"></div>
<div class="abs hk" style="left:8px;top:327.0px;width:1187.3px;height:2px"></div>
<div class="abs hk" style="left:8px;top:462.6px;width:1187.3px;height:2px"></div>
<div class="abs hk" style="left:8px;top:884.0px;width:1187.3px;height:3px"></div>
<div class="abs hk" style="left:8px;top:924.1px;width:1187.3px;height:2.4px"></div>
<div class="t" style="top:346px;font-size:17.84px;line-height:20px;left:16.30px;">Wohnort der Schüler<span class="sup" style="font-size:10.5px;top:-6.5px;letter-spacing:0">1)</span></div>
<div class="t" style="top:373px;font-size:15.6px;line-height:17px;left:16.30px;">Reihenfolge<span class="sup" style="font-size:9.2px;top:-5.5px">2)</span>:</div>
<div class="t" style="top:392px;font-size:15.6px;line-height:17px;left:16.30px;">1. Kreis;</div>
<div class="t" style="top:411px;font-size:15.6px;line-height:17px;left:16.30px;">2. Gemeinden alphabetisch</div>
<div class="t" style="top:429px;font-size:15.6px;line-height:17px;left:33.30px;">(Schulort zuerst; Ortsteile getrennt aufführen)</div>
<div class="t" style="top:351px;font-size:16.6px;line-height:19px;letter-spacing:0.276px;left:452.84px;width:600px;text-align:center;">Zahl der Schüler aus nebenstehenden Orten in</div>
<div class="t" style="top:371px;font-size:16.6px;line-height:19px;letter-spacing:0.184px;left:452.79px;width:600px;text-align:center;">K l a s s e n s t u f e&nbsp; (ohne VKL)</div>
<div class="t" style="top:428px;font-size:17.3px;line-height:20px;left:240.85px;width:600px;text-align:center;">5</div>
<div class="t" style="top:428px;font-size:17.3px;line-height:20px;left:308.30px;width:600px;text-align:center;">6</div>
<div class="t" style="top:428px;font-size:17.3px;line-height:20px;left:376.10px;width:600px;text-align:center;">7</div>
<div class="t" style="top:428px;font-size:17.3px;line-height:20px;left:443.90px;width:600px;text-align:center;">8</div>
<div class="t" style="top:428px;font-size:17.3px;line-height:20px;left:511.70px;width:600px;text-align:center;">9</div>
<div class="t" style="top:428px;font-size:17.3px;line-height:20px;left:579.50px;width:600px;text-align:center;">10</div>
<div class="t" style="top:428px;font-size:17.3px;line-height:20px;left:647.30px;width:600px;text-align:center;">5-10</div>
<div class="t" style="top:361px;font-size:17.7px;line-height:20px;left:734.25px;width:600px;text-align:center;">Vor-</div>
<div class="t" style="top:385px;font-size:17.7px;line-height:20px;left:734.25px;width:600px;text-align:center;">bereitungs-</div>
<div class="t" style="top:410px;font-size:17.7px;line-height:20px;left:734.25px;width:600px;text-align:center;">klassen</div>
<div class="t" style="top:385px;font-size:17.7px;line-height:20px;left:838.80px;width:600px;text-align:center;">Insgesamt</div>
<div class="t" style="top:470px;font-size:20.1px;line-height:22px;left:15.80px;">LK_KA, Karlsbad, Auerbach</div>
<div class="t" style="top:470px;font-size:19.8px;line-height:22px;left:443.90px;width:600px;text-align:center;">1</div>
<div class="t" style="top:470px;font-size:19.8px;line-height:22px;left:647.30px;width:600px;text-align:center;">1</div>
<div class="t" style="top:470px;font-size:19.8px;line-height:22px;left:840.80px;width:600px;text-align:center;">1</div>
<div class="t" style="top:502px;font-size:20.1px;line-height:22px;left:15.80px;">LK_RA, Hügelsheim</div>
<div class="t" style="top:502px;font-size:19.8px;line-height:22px;left:240.85px;width:600px;text-align:center;">45</div>
<div class="t" style="top:502px;font-size:19.8px;line-height:22px;left:308.30px;width:600px;text-align:center;">59</div>
<div class="t" style="top:502px;font-size:19.8px;line-height:22px;left:376.10px;width:600px;text-align:center;">45</div>
<div class="t" style="top:502px;font-size:19.8px;line-height:22px;left:443.90px;width:600px;text-align:center;">39</div>
<div class="t" style="top:502px;font-size:19.8px;line-height:22px;left:511.70px;width:600px;text-align:center;">46</div>
<div class="t" style="top:502px;font-size:19.8px;line-height:22px;left:579.50px;width:600px;text-align:center;">37</div>
<div class="t" style="top:502px;font-size:19.8px;line-height:22px;left:647.30px;width:600px;text-align:center;">271</div>
<div class="t" style="top:502px;font-size:19.8px;line-height:22px;left:734.25px;width:600px;text-align:center;">84</div>
<div class="t" style="top:502px;font-size:19.8px;line-height:22px;left:840.80px;width:600px;text-align:center;">355</div>
<div class="t" style="top:534px;font-size:20.1px;line-height:22px;left:15.80px;">LK_RA, Sinzheim, Kartung</div>
<div class="t" style="top:534px;font-size:19.8px;line-height:22px;left:579.50px;width:600px;text-align:center;">1</div>
<div class="t" style="top:534px;font-size:19.8px;line-height:22px;left:647.30px;width:600px;text-align:center;">1</div>
<div class="t" style="top:534px;font-size:19.8px;line-height:22px;left:840.80px;width:600px;text-align:center;">1</div>
<div class="t" style="top:567px;font-size:20.1px;line-height:22px;left:15.80px;">LK_RA, Sinzheim, Leiberstung</div>
<div class="t" style="top:567px;font-size:19.8px;line-height:22px;left:240.85px;width:600px;text-align:center;">1</div>
<div class="t" style="top:567px;font-size:19.8px;line-height:22px;left:647.30px;width:600px;text-align:center;">1</div>
<div class="t" style="top:567px;font-size:19.8px;line-height:22px;left:840.80px;width:600px;text-align:center;">1</div>
<div class="t" style="top:599px;font-size:20.1px;line-height:22px;left:15.80px;">SK_KA, Karlsruhe, Oststadt</div>
<div class="t" style="top:599px;font-size:19.8px;line-height:22px;left:240.85px;width:600px;text-align:center;">1</div>
<div class="t" style="top:599px;font-size:19.8px;line-height:22px;left:647.30px;width:600px;text-align:center;">1</div>
<div class="t" style="top:599px;font-size:19.8px;line-height:22px;left:840.80px;width:600px;text-align:center;">1</div>
<div class="t" style="top:631px;font-size:20.1px;line-height:22px;left:15.80px;">SK_S, Stuttgart, Mitte</div>
<div class="t" style="top:631px;font-size:19.8px;line-height:22px;left:308.30px;width:600px;text-align:center;">2</div>
<div class="t" style="top:631px;font-size:19.8px;line-height:22px;left:647.30px;width:600px;text-align:center;">2</div>
<div class="t" style="top:631px;font-size:19.8px;line-height:22px;left:840.80px;width:600px;text-align:center;">2</div>
<div class="t" style="top:664px;font-size:20.1px;line-height:22px;left:15.80px;">Frankfurt am Main, Mitte</div>
<div class="t" style="top:664px;font-size:19.8px;line-height:22px;left:308.30px;width:600px;text-align:center;">1</div>
<div class="t" style="top:664px;font-size:19.8px;line-height:22px;left:579.50px;width:600px;text-align:center;">1</div>
<div class="t" style="top:664px;font-size:19.8px;line-height:22px;left:647.30px;width:600px;text-align:center;">2</div>
<div class="t" style="top:664px;font-size:19.8px;line-height:22px;left:840.80px;width:600px;text-align:center;">2</div>
<div class="t" style="top:696px;font-size:20.1px;line-height:22px;left:15.80px;">Hamburg</div>
<div class="t" style="top:696px;font-size:19.8px;line-height:22px;left:579.50px;width:600px;text-align:center;">1</div>
<div class="t" style="top:696px;font-size:19.8px;line-height:22px;left:647.30px;width:600px;text-align:center;">1</div>
<div class="t" style="top:696px;font-size:19.8px;line-height:22px;left:840.80px;width:600px;text-align:center;">1</div>
<div class="t" style="top:728px;font-size:20.1px;line-height:22px;left:15.80px;">Landau, Germersheim</div>
<div class="t" style="top:728px;font-size:19.8px;line-height:22px;left:511.70px;width:600px;text-align:center;">1</div>
<div class="t" style="top:728px;font-size:19.8px;line-height:22px;left:647.30px;width:600px;text-align:center;">1</div>
<div class="t" style="top:728px;font-size:19.8px;line-height:22px;left:840.80px;width:600px;text-align:center;">1</div>
<div class="t" style="top:760px;font-size:20.1px;line-height:22px;left:15.80px;">Neu-Ulm, Ludwigsfeld</div>
<div class="t" style="top:760px;font-size:19.8px;line-height:22px;left:579.50px;width:600px;text-align:center;">1</div>
<div class="t" style="top:760px;font-size:19.8px;line-height:22px;left:647.30px;width:600px;text-align:center;">1</div>
<div class="t" style="top:760px;font-size:19.8px;line-height:22px;left:840.80px;width:600px;text-align:center;">1</div>
<div class="t" style="top:793px;font-size:20.1px;line-height:22px;left:15.80px;">Stuttgart*</div>
<div class="t" style="top:793px;font-size:19.8px;line-height:22px;left:308.30px;width:600px;text-align:center;">1</div>
<div class="t" style="top:793px;font-size:19.8px;line-height:22px;left:647.30px;width:600px;text-align:center;">1</div>
<div class="t" style="top:793px;font-size:19.8px;line-height:22px;left:840.80px;width:600px;text-align:center;">1</div>
<div class="t" style="top:825px;font-size:20.1px;line-height:22px;left:15.80px;">Frankreich</div>
<div class="t" style="top:825px;font-size:19.8px;line-height:22px;left:240.85px;width:600px;text-align:center;">1</div>
<div class="t" style="top:825px;font-size:19.8px;line-height:22px;left:579.50px;width:600px;text-align:center;">1</div>
<div class="t" style="top:825px;font-size:19.8px;line-height:22px;left:647.30px;width:600px;text-align:center;">2</div>
<div class="t" style="top:825px;font-size:19.8px;line-height:22px;left:840.80px;width:600px;text-align:center;">2</div>
<div class="t" style="top:857px;font-size:20.1px;line-height:22px;left:15.80px;">Schweiz</div>
<div class="t" style="top:857px;font-size:19.8px;line-height:22px;left:240.85px;width:600px;text-align:center;">1</div>
<div class="t" style="top:857px;font-size:19.8px;line-height:22px;left:579.50px;width:600px;text-align:center;">1</div>
<div class="t" style="top:857px;font-size:19.8px;line-height:22px;left:647.30px;width:600px;text-align:center;">2</div>
<div class="t" style="top:857px;font-size:19.8px;line-height:22px;left:840.80px;width:600px;text-align:center;">2</div>
<div class="t  b" style="top:897px;font-size:20px;line-height:22px;left:23.00px;">Schüler insgesamt</div>
<div class="t" style="top:895px;font-size:19.8px;line-height:22px;left:240.85px;width:600px;text-align:center;">49</div>
<div class="t" style="top:895px;font-size:19.8px;line-height:22px;left:308.30px;width:600px;text-align:center;">63</div>
<div class="t" style="top:895px;font-size:19.8px;line-height:22px;left:376.10px;width:600px;text-align:center;">45</div>
<div class="t" style="top:895px;font-size:19.8px;line-height:22px;left:443.90px;width:600px;text-align:center;">40</div>
<div class="t" style="top:895px;font-size:19.8px;line-height:22px;left:511.70px;width:600px;text-align:center;">47</div>
<div class="t" style="top:895px;font-size:19.8px;line-height:22px;left:579.50px;width:600px;text-align:center;">43</div>
<div class="t" style="top:895px;font-size:19.8px;line-height:22px;left:647.30px;width:600px;text-align:center;">287</div>
<div class="t" style="top:895px;font-size:19.8px;line-height:22px;left:734.25px;width:600px;text-align:center;">84</div>
<div class="t" style="top:895px;font-size:19.8px;line-height:22px;left:840.80px;width:600px;text-align:center;">371</div>
</div>
</div>
<!-- RIGHT PANEL -->
<div id="right" class="abs">
<div class="rt" style="top:15px;font-size:18.4px;line-height:21px;letter-spacing:-0.179px;left:79.30px;color:#1c1c1c;">Validierungsfehler</div>
<svg class="abs" style="left:302.90px;top:9.80px" width="31.20" height="31.20" viewBox="0 0 512 512"><path fill="#0079e1" d="M448 192V77.25c0-8.49-3.37-16.62-9.37-22.63L393.370 9.370c-6-6-14.140-9.370-22.630-9.370H96C78.330 0 64 14.330 64 32v160c-35.350 0-64 28.650-64 64v112c0 8.840 7.160 16 16 16h48v96c0 17.670 14.330 32 32 32h320c17.670 0 32-14.330 32-32v-96h48c8.840 0 16-7.160 16-16V256c0-35.350-28.650-64-64-64zm-64 256H128v-96h256v96zm0-224H128V64h192v48c0 8.840 7.160 16 16 16h48v96zm48 72c-13.250 0-24-10.750-24-24 0-13.260 10.750-24 24-24s24 10.740 24 24c0 13.250-10.750 24-24 24z"/></svg>
<svg class="abs" style="left:362px;top:17px" width="19" height="18" viewBox="0 0 19 18"><path d="M1.2 0.800L17.800 17.200M17.800 0.800L1.200 17.200" stroke="#111" stroke-width="2.1" fill="none"/></svg>
<div class="abs" style="left:0;top:53px;width:398px;height:1px;background:#ddd"></div>
<div class="abs" style="left:380px;top:54px;width:17px;height:941px;background:#f1f1f1"></div>
<div class="arr up" style="left:384.70000000000005px;top:61px"></div>
<div class="arr dn" style="left:384.70000000000005px;top:985px"></div>
<div class="abs" style="left:383px;top:197px;width:12px;height:294px;background:#c1c1c1"></div>
<svg class="abs" style="left:19.45px;top:74.45px" width="32.70" height="32.70" viewBox="0 0 512 512"><path fill="#efb836" d="M504 256c0 136.997-111.043 248-248 248S8 392.997 8 256C8 119.083 119.043 8 256 8s248 111.083 248 248zm-248 50c-25.405 0-46 20.595-46 46s20.595 46 46 46 46-20.595 46-46-20.595-46-46-46zm-43.673-165.346l7.418 136c.347 6.364 5.609 11.346 11.982 11.346h48.546c6.373 0 11.635-4.982 11.982-11.346l7.418-136c.375-6.874-5.098-12.654-11.982-12.654h-63.383c-6.884 0-12.356 5.78-11.981 12.654z"/></svg>
<div class="rt" style="top:64px;font-size:14px;line-height:16px;letter-spacing:-0.114px;left:68.40px;">Gesamtzahl Schüler</div>
<div class="rt" style="top:118px;font-size:14px;line-height:16px;letter-spacing:-0.084px;left:15.00px;">Die Gesamtzahl der Schüler muss auf allen Schulbögen</div>
<div class="rt" style="top:134px;font-size:14px;line-height:16px;letter-spacing:-0.085px;left:15.00px;">übereinstimmen</div>
<div class="rt lnk" style="top:159px;font-size:14px;line-height:16px;letter-spacing:-0.083px;left:15.00px;">Bogen 2 Blatt 1</div>
<div class="rt lnk" style="top:207px;font-size:14px;line-height:16px;letter-spacing:-0.083px;left:15.00px;">Bogen 2 Blatt 2</div>
<div class="rt lnk" style="top:255px;font-size:14px;line-height:16px;letter-spacing:-0.500px;left:15.00px;">SCD-Bogen</div>
<div class="rt" style="top:183px;font-size:14px;line-height:16px;letter-spacing:-0.300px;left:18.50px;color:#616161;">Anzahl: 371</div>
<div class="rt" style="top:231px;font-size:14px;line-height:16px;letter-spacing:-0.300px;left:18.50px;color:#616161;">Anzahl: 9</div>
<div class="rt" style="top:279px;font-size:14px;line-height:16px;letter-spacing:-0.300px;left:18.50px;color:#616161;">Anzahl: 371</div>
<div class="abs" style="left:7.3px;top:150.3px;width:107.5px;height:32.3px;border:2px solid #f81f1f"></div>
<svg class="abs" style="left:89.59999999999991px;top:172.3px" width="17.6" height="24" viewBox="0 0 16 22"><path d="M4.500 1.500a1.400 1.400 0 0 1 2.800 0v7l.400-2.300a1.300 1.300 0 0 1 2.500.300l.300 1.100a1.300 1.300 0 0 1 2.400.500l.200.900a1.200 1.200 0 0 1 2.200.700v5.500c0 3.500-2 5.800-5.300 5.800-2.700 0-4-1.200-5.300-3.300L1.200 12.500c-.700-1.300.800-2.400 1.900-1.300l1.400 1.500z" fill="#fff" stroke="#111" stroke-width="1.100" stroke-linejoin="round"/></svg>
<svg class="abs" style="left:20.00px;top:319.10px" width="32.20" height="32.20" viewBox="0 0 512 512"><path fill="#31c6eb" d="M504 256c0 136.997-111.043 248-248 248S8 392.997 8 256C8 119.083 119.043 8 256 8s248 111.083 248 248zm-248 50c-25.405 0-46 20.595-46 46s20.595 46 46 46 46-20.595 46-46-20.595-46-46-46zm-43.673-165.346l7.418 136c.347 6.364 5.609 11.346 11.982 11.346h48.546c6.373 0 11.635-4.982 11.982-11.346l7.418-136c.375-6.874-5.098-12.654-11.982-12.654h-63.383c-6.884 0-12.356 5.78-11.981 12.654z"/></svg>
<div class="rt" style="top:316px;font-size:14px;line-height:16px;letter-spacing:-0.400px;left:68.40px;">SIS-Klassenbogen: WRS_7a</div>
<div class="rt" style="top:338px;font-size:12px;line-height:14px;letter-spacing:0.250px;left:68.40px;color:#8c8c8c;">Werkrealschule</div>
<div class="rt" style="top:373px;font-size:14px;line-height:16px;letter-spacing:-0.016px;left:16.10px;">Prüfung Spalte Herkunft Standardwert (A)</div>
<svg class="abs" style="left:334.20px;top:375.10px" width="14.60" height="14.60" viewBox="0 0 512 512"><path fill="#6b6b6b" d="M432,320H400a16,16,0,0,0-16,16V448H64V128H208a16,16,0,0,0,16-16V80a16,16,0,0,0-16-16H48A48,48,0,0,0,0,112V464a48,48,0,0,0,48,48H400a48,48,0,0,0,48-48V336A16,16,0,0,0,432,320ZM488,0h-128c-21.37,0-32.05,25.91-17,41l35.73,35.73L135,320.37a24,24,0,0,0,0,34L157.67,377a24,24,0,0,0,34,0L435.28,133.32,471,169c15,15,41,4.5,41-17V24A24,24,0,0,0,488,0Z"/></svg>
<div class="rt" style="top:406px;font-size:14px;line-height:16px;letter-spacing:-0.124px;left:15.00px;">Für alle Schüler auf dem Klassenbogen ist der Wert "A"</div>
<div class="rt" style="top:422px;font-size:14px;line-height:16px;letter-spacing:-0.137px;left:15.00px;">(Standard-Wert) angegeben.</div>
<svg class="abs" style="left:20.00px;top:458.10px" width="32.20" height="32.20" viewBox="0 0 512 512"><path fill="#31c6eb" d="M504 256c0 136.997-111.043 248-248 248S8 392.997 8 256C8 119.083 119.043 8 256 8s248 111.083 248 248zm-248 50c-25.405 0-46 20.595-46 46s20.595 46 46 46 46-20.595 46-46-20.595-46-46-46zm-43.673-165.346l7.418 136c.347 6.364 5.609 11.346 11.982 11.346h48.546c6.373 0 11.635-4.982 11.982-11.346l7.418-136c.375-6.874-5.098-12.654-11.982-12.654h-63.383c-6.884 0-12.356 5.78-11.981 12.654z"/></svg>
<div class="rt" style="top:455px;font-size:14px;line-height:16px;letter-spacing:-0.400px;left:68.40px;">SIS-Klassenbogen: GS_3a</div>
<div class="rt" style="top:477px;font-size:12px;line-height:14px;letter-spacing:0.250px;left:68.40px;color:#8c8c8c;">Grundschule</div>
<div class="rt" style="top:512px;font-size:14px;line-height:16px;letter-spacing:-0.016px;left:16.10px;">Prüfung Spalte Herkunft Standardwert (A)</div>
<svg class="abs" style="left:334.20px;top:514.10px" width="14.60" height="14.60" viewBox="0 0 512 512"><path fill="#6b6b6b" d="M432,320H400a16,16,0,0,0-16,16V448H64V128H208a16,16,0,0,0,16-16V80a16,16,0,0,0-16-16H48A48,48,0,0,0,0,112V464a48,48,0,0,0,48,48H400a48,48,0,0,0,48-48V336A16,16,0,0,0,432,320ZM488,0h-128c-21.37,0-32.05,25.91-17,41l35.73,35.73L135,320.37a24,24,0,0,0,0,34L157.67,377a24,24,0,0,0,34,0L435.28,133.32,471,169c15,15,41,4.5,41-17V24A24,24,0,0,0,488,0Z"/></svg>
<div class="rt" style="top:545px;font-size:14px;line-height:16px;letter-spacing:-0.124px;left:15.00px;">Für alle Schüler auf dem Klassenbogen ist der Wert "A"</div>
<div class="rt" style="top:561px;font-size:14px;line-height:16px;letter-spacing:-0.137px;left:15.00px;">(Standard-Wert) angegeben.</div>
<svg class="abs" style="left:20.00px;top:598.10px" width="32.20" height="32.20" viewBox="0 0 512 512"><path fill="#31c6eb" d="M504 256c0 136.997-111.043 248-248 248S8 392.997 8 256C8 119.083 119.043 8 256 8s248 111.083 248 248zm-248 50c-25.405 0-46 20.595-46 46s20.595 46 46 46 46-20.595 46-46-20.595-46-46-46zm-43.673-165.346l7.418 136c.347 6.364 5.609 11.346 11.982 11.346h48.546c6.373 0 11.635-4.982 11.982-11.346l7.418-136c.375-6.874-5.098-12.654-11.982-12.654h-63.383c-6.884 0-12.356 5.78-11.981 12.654z"/></svg>
<div class="rt" style="top:595px;font-size:14px;line-height:16px;letter-spacing:-0.400px;left:68.40px;">SIS-Klassenbogen: WRS_8a</div>
<div class="rt" style="top:617px;font-size:12px;line-height:14px;letter-spacing:0.250px;left:68.40px;color:#8c8c8c;">Werkrealschule</div>
<div class="rt" style="top:652px;font-size:14px;line-height:16px;letter-spacing:-0.016px;left:16.10px;">Prüfung Spalte Herkunft Standardwert (A)</div>
<svg class="abs" style="left:334.20px;top:654.10px" width="14.60" height="14.60" viewBox="0 0 512 512"><path fill="#6b6b6b" d="M432,320H400a16,16,0,0,0-16,16V448H64V128H208a16,16,0,0,0,16-16V80a16,16,0,0,0-16-16H48A48,48,0,0,0,0,112V464a48,48,0,0,0,48,48H400a48,48,0,0,0,48-48V336A16,16,0,0,0,432,320ZM488,0h-128c-21.37,0-32.05,25.91-17,41l35.73,35.73L135,320.37a24,24,0,0,0,0,34L157.67,377a24,24,0,0,0,34,0L435.28,133.32,471,169c15,15,41,4.5,41-17V24A24,24,0,0,0,488,0Z"/></svg>
<div class="rt" style="top:685px;font-size:14px;line-height:16px;letter-spacing:-0.124px;left:15.00px;">Für alle Schüler auf dem Klassenbogen ist der Wert "A"</div>
<div class="rt" style="top:701px;font-size:14px;line-height:16px;letter-spacing:-0.137px;left:15.00px;">(Standard-Wert) angegeben.</div>
<svg class="abs" style="left:20.00px;top:737.10px" width="32.20" height="32.20" viewBox="0 0 512 512"><path fill="#31c6eb" d="M504 256c0 136.997-111.043 248-248 248S8 392.997 8 256C8 119.083 119.043 8 256 8s248 111.083 248 248zm-248 50c-25.405 0-46 20.595-46 46s20.595 46 46 46 46-20.595 46-46-20.595-46-46-46zm-43.673-165.346l7.418 136c.347 6.364 5.609 11.346 11.982 11.346h48.546c6.373 0 11.635-4.982 11.982-11.346l7.418-136c.375-6.874-5.098-12.654-11.982-12.654h-63.383c-6.884 0-12.356 5.78-11.981 12.654z"/></svg>
<div class="rt" style="top:734px;font-size:14px;line-height:16px;letter-spacing:-0.400px;left:68.40px;">SIS-Klassenbogen: WRS_5b</div>
<div class="rt" style="top:756px;font-size:12px;line-height:14px;letter-spacing:0.250px;left:68.40px;color:#8c8c8c;">Werkrealschule</div>
<div class="rt" style="top:791px;font-size:14px;line-height:16px;letter-spacing:-0.016px;left:16.10px;">Prüfung Spalte Herkunft Standardwert (A)</div>
<svg class="abs" style="left:334.20px;top:793.10px" width="14.60" height="14.60" viewBox="0 0 512 512"><path fill="#6b6b6b" d="M432,320H400a16,16,0,0,0-16,16V448H64V128H208a16,16,0,0,0,16-16V80a16,16,0,0,0-16-16H48A48,48,0,0,0,0,112V464a48,48,0,0,0,48,48H400a48,48,0,0,0,48-48V336A16,16,0,0,0,432,320ZM488,0h-128c-21.37,0-32.05,25.91-17,41l35.73,35.73L135,320.37a24,24,0,0,0,0,34L157.67,377a24,24,0,0,0,34,0L435.28,133.32,471,169c15,15,41,4.5,41-17V24A24,24,0,0,0,488,0Z"/></svg>
<div class="rt" style="top:824px;font-size:14px;line-height:16px;letter-spacing:-0.124px;left:15.00px;">Für alle Schüler auf dem Klassenbogen ist der Wert "A"</div>
<div class="rt" style="top:840px;font-size:14px;line-height:16px;letter-spacing:-0.137px;left:15.00px;">(Standard-Wert) angegeben.</div>
<svg class="abs" style="left:20.00px;top:877.10px" width="32.20" height="32.20" viewBox="0 0 512 512"><path fill="#31c6eb" d="M504 256c0 136.997-111.043 248-248 248S8 392.997 8 256C8 119.083 119.043 8 256 8s248 111.083 248 248zm-248 50c-25.405 0-46 20.595-46 46s20.595 46 46 46 46-20.595 46-46-20.595-46-46-46zm-43.673-165.346l7.418 136c.347 6.364 5.609 11.346 11.982 11.346h48.546c6.373 0 11.635-4.982 11.982-11.346l7.418-136c.375-6.874-5.098-12.654-11.982-12.654h-63.383c-6.884 0-12.356 5.78-11.981 12.654z"/></svg>
<div class="rt" style="top:874px;font-size:14px;line-height:16px;letter-spacing:-0.400px;left:68.40px;">SIS-Klassenbogen: GS_4a_MUSP</div>
<div class="rt" style="top:896px;font-size:12px;line-height:14px;letter-spacing:0.250px;left:68.40px;color:#8c8c8c;">Grundschule</div>
<div class="rt" style="top:931px;font-size:14px;line-height:16px;letter-spacing:-0.016px;left:16.10px;">Prüfung Spalte Herkunft Standardwert (A)</div>
<svg class="abs" style="left:334.20px;top:933.10px" width="14.60" height="14.60" viewBox="0 0 512 512"><path fill="#6b6b6b" d="M432,320H400a16,16,0,0,0-16,16V448H64V128H208a16,16,0,0,0,16-16V80a16,16,0,0,0-16-16H48A48,48,0,0,0,0,112V464a48,48,0,0,0,48,48H400a48,48,0,0,0,48-48V336A16,16,0,0,0,432,320ZM488,0h-128c-21.37,0-32.05,25.91-17,41l35.73,35.73L135,320.37a24,24,0,0,0,0,34L157.67,377a24,24,0,0,0,34,0L435.28,133.32,471,169c15,15,41,4.5,41-17V24A24,24,0,0,0,488,0Z"/></svg>
<div class="rt" style="top:964px;font-size:14px;line-height:16px;letter-spacing:-0.124px;left:15.00px;">Für alle Schüler auf dem Klassenbogen ist der Wert "A"</div>
<div class="rt" style="top:980px;font-size:14px;line-height:16px;letter-spacing:-0.137px;left:15.00px;">(Standard-Wert) angegeben.</div>
</div>
<svg class="abs" style="left:0;top:0;z-index:9;pointer-events:none" width="1920" height="1158" viewBox="0 0 1920 1158" shape-rendering="crispEdges"><rect x="10" y="72" width="5" height="5" fill="#d8e4ec"/><rect x="15" y="72" width="5" height="5" fill="#527eaa"/><rect x="20" y="72" width="5" height="5" fill="#96c9e2"/><rect x="25" y="72" width="5" height="5" fill="#afe7f5"/><rect x="30" y="72" width="5" height="5" fill="#fffdff"/><rect x="115" y="72" width="5" height="5" fill="#e9faff"/><rect x="120" y="72" width="5" height="5" fill="#a8e4fc"/><rect x="125" y="72" width="5" height="5" fill="#c1effc"/><rect x="385" y="72" width="5" height="5" fill="#9fbafc"/><rect x="390" y="72" width="5" height="5" fill="#97bcfb"/><rect x="685" y="72" width="5" height="5" fill="#e0e3dd"/><rect x="690" y="72" width="5" height="5" fill="#b1acb2"/><rect x="695" y="72" width="5" height="5" fill="#efe5e6"/><rect x="785" y="72" width="5" height="5" fill="#e8f2f4"/><rect x="790" y="72" width="5" height="5" fill="#8d8fc1"/><rect x="795" y="72" width="5" height="5" fill="#888dc1"/><rect x="800" y="72" width="5" height="5" fill="#e9eef4"/><rect x="10" y="77" width="5" height="5" fill="#d7e1ef"/><rect x="15" y="77" width="5" height="5" fill="#2658a0"/><rect x="20" y="77" width="5" height="5" fill="#5fa3d4"/><rect x="25" y="77" width="5" height="5" fill="#47b4ed"/><rect x="30" y="77" width="5" height="5" fill="#f6f8f8"/><rect x="35" y="77" width="5" height="5" fill="#f5f6ec"/><rect x="40" y="77" width="5" height="5" fill="#f0ece9"/><rect x="45" y="77" width="5" height="5" fill="#d6dcde"/><rect x="50" y="77" width="5" height="5" fill="#e5ece6"/><rect x="55" y="77" width="5" height="5" fill="#dedae2"/><rect x="65" y="77" width="5" height="5" fill="#e5e0e6"/><rect x="70" y="77" width="5" height="5" fill="#eeecf3"/><rect x="85" y="77" width="5" height="5" fill="#e2e5e8"/><rect x="90" y="77" width="5" height="5" fill="#f8f3f2"/><rect x="115" y="77" width="5" height="5" fill="#9fdafe"/><rect x="120" y="77" width="5" height="5" fill="#8ed5f7"/><rect x="125" y="77" width="5" height="5" fill="#85d7f8"/><rect x="130" y="77" width="5" height="5" fill="#7fd4fc"/><rect x="135" y="77" width="5" height="5" fill="#f8fbff"/><rect x="140" y="77" width="5" height="5" fill="#edeef6"/><rect x="145" y="77" width="5" height="5" fill="#f0f0ea"/><rect x="150" y="77" width="5" height="5" fill="#d6d9d3"/><rect x="155" y="77" width="5" height="5" fill="#e9e9e3"/><rect x="160" y="77" width="5" height="5" fill="#fdfbfd"/><rect x="165" y="77" width="5" height="5" fill="#dce0e2"/><rect x="170" y="77" width="5" height="5" fill="#e7e7ef"/><rect x="185" y="77" width="5" height="5" fill="#faf2f5"/><rect x="190" y="77" width="5" height="5" fill="#e8e5e7"/><rect x="260" y="77" width="5" height="5" fill="#e6e7eb"/><rect x="265" y="77" width="5" height="5" fill="#f4f5fa"/><rect x="270" y="77" width="5" height="5" fill="#d7dee1"/><rect x="275" y="77" width="5" height="5" fill="#e1e0e8"/><rect x="280" y="77" width="5" height="5" fill="#e6e6e9"/><rect x="285" y="77" width="5" height="5" fill="#f7f0f3"/><rect x="290" y="77" width="5" height="5" fill="#d8dfdb"/><rect x="295" y="77" width="5" height="5" fill="#ede5e8"/><rect x="300" y="77" width="5" height="5" fill="#f2f5f0"/><rect x="305" y="77" width="5" height="5" fill="#e6e5eb"/><rect x="310" y="77" width="5" height="5" fill="#e0e8e9"/><rect x="315" y="77" width="5" height="5" fill="#e2e4eb"/><rect x="330" y="77" width="5" height="5" fill="#f7f9f4"/><rect x="345" y="77" width="5" height="5" fill="#edf0f6"/><rect x="350" y="77" width="5" height="5" fill="#f7f8f9"/><rect x="380" y="77" width="5" height="5" fill="#a0bffc"/><rect x="385" y="77" width="5" height="5" fill="#3575f5"/><rect x="390" y="77" width="5" height="5" fill="#3e80ef"/><rect x="395" y="77" width="5" height="5" fill="#9cbef3"/><rect x="405" y="77" width="5" height="5" fill="#dbdddc"/><rect x="410" y="77" width="5" height="5" fill="#efedee"/><rect x="430" y="77" width="5" height="5" fill="#f3f1f8"/><rect x="440" y="77" width="5" height="5" fill="#e5ebe3"/><rect x="475" y="77" width="5" height="5" fill="#e8e6ea"/><rect x="480" y="77" width="5" height="5" fill="#ebebe8"/><rect x="485" y="77" width="5" height="5" fill="#d8e1db"/><rect x="490" y="77" width="5" height="5" fill="#ebf0ee"/><rect x="495" y="77" width="5" height="5" fill="#e7edea"/><rect x="500" y="77" width="5" height="5" fill="#dedde5"/><rect x="535" y="77" width="5" height="5" fill="#f8da66"/><rect x="540" y="77" width="5" height="5" fill="#f5d76b"/><rect x="545" y="77" width="5" height="5" fill="#f6e38c"/><rect x="550" y="77" width="5" height="5" fill="#fffee7"/><rect x="560" y="77" width="5" height="5" fill="#edf0e7"/><rect x="580" y="77" width="5" height="5" fill="#e1e2e5"/><rect x="585" y="77" width="5" height="5" fill="#e5e6ea"/><rect x="590" y="77" width="5" height="5" fill="#f2f3f4"/><rect x="600" y="77" width="5" height="5" fill="#efeffa"/><rect x="605" y="77" width="5" height="5" fill="#fbf2f7"/><rect x="620" y="77" width="5" height="5" fill="#f4f4f5"/><rect x="655" y="77" width="5" height="5" fill="#f6f6f3"/><rect x="680" y="77" width="5" height="5" fill="#c4c6c3"/><rect x="685" y="77" width="5" height="5" fill="#929490"/><rect x="690" y="77" width="5" height="5" fill="#717375"/><rect x="695" y="77" width="5" height="5" fill="#a7a9a4"/><rect x="705" y="77" width="5" height="5" fill="#e1dfde"/><rect x="710" y="77" width="5" height="5" fill="#eceef1"/><rect x="720" y="77" width="5" height="5" fill="#f4f7f5"/><rect x="750" y="77" width="5" height="5" fill="#eaeef0"/><rect x="760" y="77" width="5" height="5" fill="#f6fafa"/><rect x="765" y="77" width="5" height="5" fill="#fdfef7"/><rect x="785" y="77" width="5" height="5" fill="#9397c0"/><rect x="790" y="77" width="5" height="5" fill="#585ca9"/><rect x="795" y="77" width="5" height="5" fill="#5a65a9"/><rect x="800" y="77" width="5" height="5" fill="#888fbf"/><rect x="810" y="77" width="5" height="5" fill="#e0e6e0"/><rect x="815" y="77" width="5" height="5" fill="#e3ebe3"/><rect x="820" y="77" width="5" height="5" fill="#f5f6ff"/><rect x="825" y="77" width="5" height="5" fill="#f8f6ff"/><rect x="830" y="77" width="5" height="5" fill="#d2dcdb"/><rect x="835" y="77" width="5" height="5" fill="#fafbf7"/><rect x="845" y="77" width="5" height="5" fill="#f8eff8"/><rect x="855" y="77" width="5" height="5" fill="#eff2eb"/><rect x="860" y="77" width="5" height="5" fill="#dee1d8"/><rect x="870" y="77" width="5" height="5" fill="#f5f8fc"/><rect x="875" y="77" width="5" height="5" fill="#f1f0f1"/><rect x="905" y="77" width="5" height="5" fill="#e2e4e0"/><rect x="910" y="77" width="5" height="5" fill="#eff0f0"/><rect x="10" y="82" width="5" height="5" fill="#d1d7ea"/><rect x="15" y="82" width="5" height="5" fill="#2a5b9f"/><rect x="20" y="82" width="5" height="5" fill="#55a1d7"/><rect x="25" y="82" width="5" height="5" fill="#47b8e9"/><rect x="30" y="82" width="5" height="5" fill="#f7fff9"/><rect x="35" y="82" width="5" height="5" fill="#bec6ca"/><rect x="40" y="82" width="5" height="5" fill="#c1c1c6"/><rect x="45" y="82" width="5" height="5" fill="#b5b7b8"/><rect x="50" y="82" width="5" height="5" fill="#bcbabb"/><rect x="55" y="82" width="5" height="5" fill="#f5f8f0"/><rect x="60" y="82" width="5" height="5" fill="#fbf7fd"/><rect x="65" y="82" width="5" height="5" fill="#d8d5d6"/><rect x="70" y="82" width="5" height="5" fill="#c7cdcd"/><rect x="75" y="82" width="5" height="5" fill="#c8cbcc"/><rect x="80" y="82" width="5" height="5" fill="#b5aeba"/><rect x="85" y="82" width="5" height="5" fill="#bfc2c2"/><rect x="90" y="82" width="5" height="5" fill="#b2b3b2"/><rect x="95" y="82" width="5" height="5" fill="#cbcfd2"/><rect x="115" y="82" width="5" height="5" fill="#97defe"/><rect x="120" y="82" width="5" height="5" fill="#7ecff3"/><rect x="125" y="82" width="5" height="5" fill="#81d5fc"/><rect x="130" y="82" width="5" height="5" fill="#83cff3"/><rect x="135" y="82" width="5" height="5" fill="#f5f9ff"/><rect x="140" y="82" width="5" height="5" fill="#c6c8c2"/><rect x="145" y="82" width="5" height="5" fill="#ccc6c9"/><rect x="150" y="82" width="5" height="5" fill="#d8d1d2"/><rect x="155" y="82" width="5" height="5" fill="#b6b0b3"/><rect x="160" y="82" width="5" height="5" fill="#f5f7ef"/><rect x="165" y="82" width="5" height="5" fill="#c1c3c5"/><rect x="170" y="82" width="5" height="5" fill="#bdc2c9"/><rect x="175" y="82" width="5" height="5" fill="#c1c4c1"/><rect x="180" y="82" width="5" height="5" fill="#c0c6c1"/><rect x="185" y="82" width="5" height="5" fill="#bec0b8"/><rect x="190" y="82" width="5" height="5" fill="#bdb7be"/><rect x="195" y="82" width="5" height="5" fill="#b5b0b7"/><rect x="200" y="82" width="5" height="5" fill="#cbcec9"/><rect x="205" y="82" width="5" height="5" fill="#bdc1bf"/><rect x="210" y="82" width="5" height="5" fill="#c7c3c9"/><rect x="215" y="82" width="5" height="5" fill="#bbc1c2"/><rect x="235" y="82" width="5" height="5" fill="#4a464b"/><rect x="240" y="82" width="5" height="5" fill="#4b464e"/><rect x="245" y="82" width="5" height="5" fill="#4b454f"/><rect x="250" y="82" width="5" height="5" fill="#f1f3f8"/><rect x="260" y="82" width="5" height="5" fill="#c2c2c5"/><rect x="265" y="82" width="5" height="5" fill="#c4c3c3"/><rect x="270" y="82" width="5" height="5" fill="#c8d1d3"/><rect x="275" y="82" width="5" height="5" fill="#d4d7d4"/><rect x="280" y="82" width="5" height="5" fill="#d1d3da"/><rect x="285" y="82" width="5" height="5" fill="#f0f6f3"/><rect x="290" y="82" width="5" height="5" fill="#dfdbdc"/><rect x="295" y="82" width="5" height="5" fill="#bfc2c6"/><rect x="300" y="82" width="5" height="5" fill="#b8bfb8"/><rect x="305" y="82" width="5" height="5" fill="#cbcacc"/><rect x="310" y="82" width="5" height="5" fill="#eaeae4"/><rect x="315" y="82" width="5" height="5" fill="#bcc0c5"/><rect x="320" y="82" width="5" height="5" fill="#cccccc"/><rect x="325" y="82" width="5" height="5" fill="#b7bbbb"/><rect x="330" y="82" width="5" height="5" fill="#b8bab8"/><rect x="335" y="82" width="5" height="5" fill="#bec5be"/><rect x="340" y="82" width="5" height="5" fill="#afb1b4"/><rect x="345" y="82" width="5" height="5" fill="#bbbec0"/><rect x="350" y="82" width="5" height="5" fill="#b6bcba"/><rect x="355" y="82" width="5" height="5" fill="#b5bdba"/><rect x="360" y="82" width="5" height="5" fill="#c4c7c0"/><rect x="380" y="82" width="5" height="5" fill="#9abbf7"/><rect x="385" y="82" width="5" height="5" fill="#3a7aec"/><rect x="390" y="82" width="5" height="5" fill="#3a75f0"/><rect x="395" y="82" width="5" height="5" fill="#8fb2f7"/><rect x="405" y="82" width="5" height="5" fill="#d9d9d1"/><rect x="410" y="82" width="5" height="5" fill="#c8c7c2"/><rect x="415" y="82" width="5" height="5" fill="#b6b5b5"/><rect x="420" y="82" width="5" height="5" fill="#bfc5c0"/><rect x="425" y="82" width="5" height="5" fill="#c8c7c2"/><rect x="430" y="82" width="5" height="5" fill="#b6b4ba"/><rect x="435" y="82" width="5" height="5" fill="#bebfbd"/><rect x="440" y="82" width="5" height="5" fill="#c3c5c6"/><rect x="445" y="82" width="5" height="5" fill="#afb4b3"/><rect x="450" y="82" width="5" height="5" fill="#b9b9bb"/><rect x="455" y="82" width="5" height="5" fill="#c1c2c8"/><rect x="460" y="82" width="5" height="5" fill="#bdbcbd"/><rect x="465" y="82" width="5" height="5" fill="#f9f5f7"/><rect x="470" y="82" width="5" height="5" fill="#f4f0ee"/><rect x="475" y="82" width="5" height="5" fill="#dad8d5"/><rect x="480" y="82" width="5" height="5" fill="#d0d3d5"/><rect x="485" y="82" width="5" height="5" fill="#bfbec2"/><rect x="490" y="82" width="5" height="5" fill="#f3ecf0"/><rect x="495" y="82" width="5" height="5" fill="#f1f2f1"/><rect x="500" y="82" width="5" height="5" fill="#b4b3b3"/><rect x="505" y="82" width="5" height="5" fill="#bfc1c7"/><rect x="510" y="82" width="5" height="5" fill="#b8b9c0"/><rect x="515" y="82" width="5" height="5" fill="#e0e4dd"/><rect x="535" y="82" width="5" height="5" fill="#f7d562"/><rect x="540" y="82" width="5" height="5" fill="#fed363"/><rect x="545" y="82" width="5" height="5" fill="#f9da83"/><rect x="550" y="82" width="5" height="5" fill="#fcf4e3"/><rect x="555" y="82" width="5" height="5" fill="#b9b5bd"/><rect x="560" y="82" width="5" height="5" fill="#ccd3cc"/><rect x="565" y="82" width="5" height="5" fill="#b0b2ba"/><rect x="570" y="82" width="5" height="5" fill="#c5c2c1"/><rect x="575" y="82" width="5" height="5" fill="#e6eae7"/><rect x="580" y="82" width="5" height="5" fill="#c2c3c5"/><rect x="585" y="82" width="5" height="5" fill="#dad9da"/><rect x="590" y="82" width="5" height="5" fill="#b1b5af"/><rect x="595" y="82" width="5" height="5" fill="#ccc7cc"/><rect x="600" y="82" width="5" height="5" fill="#b6b8af"/><rect x="605" y="82" width="5" height="5" fill="#afb4ba"/><rect x="610" y="82" width="5" height="5" fill="#b8bcc4"/><rect x="615" y="82" width="5" height="5" fill="#d9dddd"/><rect x="620" y="82" width="5" height="5" fill="#d6dad2"/><rect x="625" y="82" width="5" height="5" fill="#abadb0"/><rect x="630" y="82" width="5" height="5" fill="#bfc4bf"/><rect x="635" y="82" width="5" height="5" fill="#c1c0c8"/><rect x="640" y="82" width="5" height="5" fill="#acabac"/><rect x="645" y="82" width="5" height="5" fill="#cbcbce"/><rect x="650" y="82" width="5" height="5" fill="#c1c3c1"/><rect x="655" y="82" width="5" height="5" fill="#a6a0a7"/><rect x="660" y="82" width="5" height="5" fill="#c6c6c0"/><rect x="680" y="82" width="5" height="5" fill="#b7bebc"/><rect x="685" y="82" width="5" height="5" fill="#888883"/><rect x="690" y="82" width="5" height="5" fill="#7b7975"/><rect x="695" y="82" width="5" height="5" fill="#979397"/><rect x="705" y="82" width="5" height="5" fill="#dbd2d8"/><rect x="710" y="82" width="5" height="5" fill="#c8c8d0"/><rect x="715" y="82" width="5" height="5" fill="#a4a3a7"/><rect x="720" y="82" width="5" height="5" fill="#c7c7c1"/><rect x="725" y="82" width="5" height="5" fill="#a6b1aa"/><rect x="730" y="82" width="5" height="5" fill="#c7c6cc"/><rect x="735" y="82" width="5" height="5" fill="#bbbebd"/><rect x="740" y="82" width="5" height="5" fill="#b8b9ba"/><rect x="745" y="82" width="5" height="5" fill="#d4cccd"/><rect x="750" y="82" width="5" height="5" fill="#bfb7c1"/><rect x="755" y="82" width="5" height="5" fill="#bac0bf"/><rect x="760" y="82" width="5" height="5" fill="#c3c1c3"/><rect x="765" y="82" width="5" height="5" fill="#c7c9c4"/><rect x="770" y="82" width="5" height="5" fill="#e0dedb"/><rect x="785" y="82" width="5" height="5" fill="#878ac0"/><rect x="790" y="82" width="5" height="5" fill="#5561a5"/><rect x="795" y="82" width="5" height="5" fill="#5b5ba4"/><rect x="800" y="82" width="5" height="5" fill="#7b7cb9"/><rect x="810" y="82" width="5" height="5" fill="#d7d4d8"/><rect x="815" y="82" width="5" height="5" fill="#c1bdc0"/><rect x="820" y="82" width="5" height="5" fill="#c6bfc2"/><rect x="825" y="82" width="5" height="5" fill="#babdbe"/><rect x="830" y="82" width="5" height="5" fill="#e3e1e4"/><rect x="835" y="82" width="5" height="5" fill="#bcb8be"/><rect x="840" y="82" width="5" height="5" fill="#bab9c2"/><rect x="845" y="82" width="5" height="5" fill="#b2b4b1"/><rect x="850" y="82" width="5" height="5" fill="#c0bcc5"/><rect x="855" y="82" width="5" height="5" fill="#c8c1cb"/><rect x="860" y="82" width="5" height="5" fill="#cbcbd4"/><rect x="865" y="82" width="5" height="5" fill="#cbcfd2"/><rect x="870" y="82" width="5" height="5" fill="#adb7b4"/><rect x="875" y="82" width="5" height="5" fill="#c6c5cc"/><rect x="880" y="82" width="5" height="5" fill="#aca8a8"/><rect x="885" y="82" width="5" height="5" fill="#bfc1bf"/><rect x="890" y="82" width="5" height="5" fill="#ccd5d5"/><rect x="895" y="82" width="5" height="5" fill="#f3f3f2"/><rect x="900" y="82" width="5" height="5" fill="#faf7f9"/><rect x="905" y="82" width="5" height="5" fill="#cfd1d2"/><rect x="910" y="82" width="5" height="5" fill="#bcc3be"/><rect x="915" y="82" width="5" height="5" fill="#bdc3c4"/><rect x="920" y="82" width="5" height="5" fill="#dddde4"/><rect x="10" y="87" width="5" height="5" fill="#ccd8ea"/><rect x="15" y="87" width="5" height="5" fill="#255896"/><rect x="20" y="87" width="5" height="5" fill="#56a2d3"/><rect x="25" y="87" width="5" height="5" fill="#4abbef"/><rect x="30" y="87" width="5" height="5" fill="#f0f7f8"/><rect x="35" y="87" width="5" height="5" fill="#f2f1ee"/><rect x="40" y="87" width="5" height="5" fill="#f0ebee"/><rect x="45" y="87" width="5" height="5" fill="#f2f8f4"/><rect x="50" y="87" width="5" height="5" fill="#e8e6eb"/><rect x="55" y="87" width="5" height="5" fill="#e0e1e5"/><rect x="65" y="87" width="5" height="5" fill="#e5dfdf"/><rect x="70" y="87" width="5" height="5" fill="#eff0ed"/><rect x="75" y="87" width="5" height="5" fill="#ece9e7"/><rect x="80" y="87" width="5" height="5" fill="#e8e7ef"/><rect x="85" y="87" width="5" height="5" fill="#f3f3ee"/><rect x="90" y="87" width="5" height="5" fill="#d7dbda"/><rect x="95" y="87" width="5" height="5" fill="#d2d1d3"/><rect x="115" y="87" width="5" height="5" fill="#94d7fa"/><rect x="120" y="87" width="5" height="5" fill="#84d3f5"/><rect x="125" y="87" width="5" height="5" fill="#7dd2fa"/><rect x="130" y="87" width="5" height="5" fill="#7ed8f2"/><rect x="135" y="87" width="5" height="5" fill="#f6fdfd"/><rect x="140" y="87" width="5" height="5" fill="#f6f6f8"/><rect x="145" y="87" width="5" height="5" fill="#f3ecf3"/><rect x="150" y="87" width="5" height="5" fill="#dadad8"/><rect x="155" y="87" width="5" height="5" fill="#eef1e8"/><rect x="160" y="87" width="5" height="5" fill="#fefafc"/><rect x="165" y="87" width="5" height="5" fill="#f7f8f4"/><rect x="170" y="87" width="5" height="5" fill="#f7fff7"/><rect x="175" y="87" width="5" height="5" fill="#e2e7e2"/><rect x="180" y="87" width="5" height="5" fill="#e1eaea"/><rect x="185" y="87" width="5" height="5" fill="#e4e5e5"/><rect x="190" y="87" width="5" height="5" fill="#e6e8f1"/><rect x="195" y="87" width="5" height="5" fill="#d9dbdc"/><rect x="200" y="87" width="5" height="5" fill="#e0e6e9"/><rect x="205" y="87" width="5" height="5" fill="#edebee"/><rect x="210" y="87" width="5" height="5" fill="#e2e6ef"/><rect x="215" y="87" width="5" height="5" fill="#dee1e4"/><rect x="235" y="87" width="5" height="5" fill="#e1e4de"/><rect x="240" y="87" width="5" height="5" fill="#dce5db"/><rect x="245" y="87" width="5" height="5" fill="#e4dbe5"/><rect x="260" y="87" width="5" height="5" fill="#f4f4ee"/><rect x="265" y="87" width="5" height="5" fill="#e6efe8"/><rect x="270" y="87" width="5" height="5" fill="#dae2e4"/><rect x="275" y="87" width="5" height="5" fill="#e0ebe7"/><rect x="280" y="87" width="5" height="5" fill="#eae7eb"/><rect x="285" y="87" width="5" height="5" fill="#f3ebe9"/><rect x="290" y="87" width="5" height="5" fill="#dbdcdf"/><rect x="295" y="87" width="5" height="5" fill="#f1e7e9"/><rect x="300" y="87" width="5" height="5" fill="#f1f2f3"/><rect x="305" y="87" width="5" height="5" fill="#f1f2fa"/><rect x="310" y="87" width="5" height="5" fill="#f7faf6"/><rect x="315" y="87" width="5" height="5" fill="#e8ecf1"/><rect x="320" y="87" width="5" height="5" fill="#ece9e9"/><rect x="325" y="87" width="5" height="5" fill="#e3e2e4"/><rect x="330" y="87" width="5" height="5" fill="#e8e1e6"/><rect x="335" y="87" width="5" height="5" fill="#eeede6"/><rect x="340" y="87" width="5" height="5" fill="#e6e5dd"/><rect x="345" y="87" width="5" height="5" fill="#ebebe9"/><rect x="350" y="87" width="5" height="5" fill="#e9e3e9"/><rect x="355" y="87" width="5" height="5" fill="#e1e0eb"/><rect x="360" y="87" width="5" height="5" fill="#f4f7f3"/><rect x="385" y="87" width="5" height="5" fill="#97bcf2"/><rect x="390" y="87" width="5" height="5" fill="#8eb2f2"/><rect x="405" y="87" width="5" height="5" fill="#f3f0f2"/><rect x="410" y="87" width="5" height="5" fill="#ecebec"/><rect x="415" y="87" width="5" height="5" fill="#e7eced"/><rect x="420" y="87" width="5" height="5" fill="#f4f4ee"/><rect x="425" y="87" width="5" height="5" fill="#f8f0ee"/><rect x="430" y="87" width="5" height="5" fill="#e6e9e5"/><rect x="435" y="87" width="5" height="5" fill="#e3dfe8"/><rect x="440" y="87" width="5" height="5" fill="#eeeff0"/><rect x="445" y="87" width="5" height="5" fill="#e5e7e3"/><rect x="450" y="87" width="5" height="5" fill="#e6e8e3"/><rect x="455" y="87" width="5" height="5" fill="#ecf2f2"/><rect x="460" y="87" width="5" height="5" fill="#dde7e2"/><rect x="475" y="87" width="5" height="5" fill="#ebe5e3"/><rect x="480" y="87" width="5" height="5" fill="#e9eee9"/><rect x="485" y="87" width="5" height="5" fill="#e4e3df"/><rect x="490" y="87" width="5" height="5" fill="#e9eceb"/><rect x="495" y="87" width="5" height="5" fill="#fafdff"/><rect x="500" y="87" width="5" height="5" fill="#eee9ea"/><rect x="505" y="87" width="5" height="5" fill="#e5e8e3"/><rect x="510" y="87" width="5" height="5" fill="#ecefef"/><rect x="515" y="87" width="5" height="5" fill="#eff5fa"/><rect x="535" y="87" width="5" height="5" fill="#f9d96b"/><rect x="540" y="87" width="5" height="5" fill="#fddb67"/><rect x="545" y="87" width="5" height="5" fill="#fbd986"/><rect x="550" y="87" width="5" height="5" fill="#fcf9ed"/><rect x="555" y="87" width="5" height="5" fill="#eae9f1"/><rect x="560" y="87" width="5" height="5" fill="#eae4e4"/><rect x="565" y="87" width="5" height="5" fill="#dcd9e3"/><rect x="570" y="87" width="5" height="5" fill="#ecedef"/><rect x="575" y="87" width="5" height="5" fill="#f1f0f3"/><rect x="580" y="87" width="5" height="5" fill="#f3f1ed"/><rect x="585" y="87" width="5" height="5" fill="#fffef6"/><rect x="590" y="87" width="5" height="5" fill="#e8ecef"/><rect x="595" y="87" width="5" height="5" fill="#edecf2"/><rect x="600" y="87" width="5" height="5" fill="#dce2e2"/><rect x="605" y="87" width="5" height="5" fill="#e6e7ea"/><rect x="610" y="87" width="5" height="5" fill="#ece5e8"/><rect x="615" y="87" width="5" height="5" fill="#f4faf3"/><rect x="620" y="87" width="5" height="5" fill="#f7f2f3"/><rect x="625" y="87" width="5" height="5" fill="#e4e7ea"/><rect x="630" y="87" width="5" height="5" fill="#f3efed"/><rect x="635" y="87" width="5" height="5" fill="#d3d0d0"/><rect x="640" y="87" width="5" height="5" fill="#e7e8f0"/><rect x="645" y="87" width="5" height="5" fill="#e3e9ea"/><rect x="650" y="87" width="5" height="5" fill="#f0f5f7"/><rect x="655" y="87" width="5" height="5" fill="#e8e7e1"/><rect x="660" y="87" width="5" height="5" fill="#e0e5e5"/><rect x="680" y="87" width="5" height="5" fill="#ced6cf"/><rect x="685" y="87" width="5" height="5" fill="#a0a197"/><rect x="690" y="87" width="5" height="5" fill="#7b7573"/><rect x="695" y="87" width="5" height="5" fill="#acaab0"/><rect x="705" y="87" width="5" height="5" fill="#dee4e5"/><rect x="710" y="87" width="5" height="5" fill="#e8eced"/><rect x="715" y="87" width="5" height="5" fill="#d8dadb"/><rect x="720" y="87" width="5" height="5" fill="#ece8e6"/><rect x="725" y="87" width="5" height="5" fill="#dcdfe2"/><rect x="730" y="87" width="5" height="5" fill="#eff5f0"/><rect x="735" y="87" width="5" height="5" fill="#e8e7e3"/><rect x="740" y="87" width="5" height="5" fill="#ece9eb"/><rect x="745" y="87" width="5" height="5" fill="#e3e4e2"/><rect x="750" y="87" width="5" height="5" fill="#eaf3f4"/><rect x="755" y="87" width="5" height="5" fill="#e5e6e3"/><rect x="760" y="87" width="5" height="5" fill="#eceae5"/><rect x="765" y="87" width="5" height="5" fill="#dfe1db"/><rect x="770" y="87" width="5" height="5" fill="#f7f1ed"/><rect x="785" y="87" width="5" height="5" fill="#d8d6eb"/><rect x="790" y="87" width="5" height="5" fill="#6667ac"/><rect x="795" y="87" width="5" height="5" fill="#676aab"/><rect x="800" y="87" width="5" height="5" fill="#d4d1e5"/><rect x="810" y="87" width="5" height="5" fill="#e5e8e2"/><rect x="815" y="87" width="5" height="5" fill="#e4edeb"/><rect x="820" y="87" width="5" height="5" fill="#dee5e6"/><rect x="825" y="87" width="5" height="5" fill="#e5ebea"/><rect x="830" y="87" width="5" height="5" fill="#dcd7d4"/><rect x="835" y="87" width="5" height="5" fill="#eff0ec"/><rect x="840" y="87" width="5" height="5" fill="#e0e2df"/><rect x="845" y="87" width="5" height="5" fill="#ebeae8"/><rect x="850" y="87" width="5" height="5" fill="#dee4e2"/><rect x="855" y="87" width="5" height="5" fill="#eee8eb"/><rect x="860" y="87" width="5" height="5" fill="#d9dcdf"/><rect x="865" y="87" width="5" height="5" fill="#e5e5ea"/><rect x="870" y="87" width="5" height="5" fill="#dfe3e0"/><rect x="875" y="87" width="5" height="5" fill="#e6ecf1"/><rect x="880" y="87" width="5" height="5" fill="#e5e2e1"/><rect x="885" y="87" width="5" height="5" fill="#ebedee"/><rect x="890" y="87" width="5" height="5" fill="#f8eef8"/><rect x="905" y="87" width="5" height="5" fill="#e0e0df"/><rect x="910" y="87" width="5" height="5" fill="#f1e8ed"/><rect x="915" y="87" width="5" height="5" fill="#e4e1e2"/><rect x="8" y="177" width="5" height="5" fill="#d4d5d6"/><rect x="13" y="177" width="5" height="5" fill="#eceaec"/><rect x="18" y="177" width="5" height="5" fill="#d5dbe2"/><rect x="23" y="177" width="5" height="5" fill="#f2f5ea"/><rect x="28" y="177" width="5" height="5" fill="#f0edf2"/><rect x="33" y="177" width="5" height="5" fill="#e1d9dc"/><rect x="38" y="177" width="5" height="5" fill="#eef7f5"/><rect x="43" y="177" width="5" height="5" fill="#f2faf1"/><rect x="48" y="177" width="5" height="5" fill="#faf3f2"/><rect x="53" y="177" width="5" height="5" fill="#f9efef"/><rect x="58" y="177" width="5" height="5" fill="#fbfaf2"/><rect x="63" y="177" width="5" height="5" fill="#f5eff1"/><rect x="68" y="177" width="5" height="5" fill="#dbe6e2"/><rect x="73" y="177" width="5" height="5" fill="#f9f8ef"/><rect x="78" y="177" width="5" height="5" fill="#edeaea"/><rect x="83" y="177" width="5" height="5" fill="#ebeef2"/><rect x="88" y="177" width="5" height="5" fill="#f1fbf6"/><rect x="93" y="177" width="5" height="5" fill="#ebf2ed"/><rect x="98" y="177" width="5" height="5" fill="#f0f2f6"/><rect x="103" y="177" width="5" height="5" fill="#ecf8eb"/><rect x="108" y="177" width="5" height="5" fill="#f0f1e6"/><rect x="113" y="177" width="5" height="5" fill="#e0dbde"/><rect x="118" y="177" width="5" height="5" fill="#efeff1"/><rect x="123" y="177" width="5" height="5" fill="#fff5fc"/><rect x="128" y="177" width="5" height="5" fill="#f9f9f1"/><rect x="133" y="177" width="5" height="5" fill="#f5f7fb"/><rect x="138" y="177" width="5" height="5" fill="#e7f0f0"/><rect x="143" y="177" width="5" height="5" fill="#d8ccd9"/><rect x="148" y="177" width="5" height="5" fill="#edf0f4"/><rect x="153" y="177" width="5" height="5" fill="#f8f0f8"/><rect x="158" y="177" width="5" height="5" fill="#d3d0d0"/><rect x="163" y="177" width="5" height="5" fill="#f5f3f4"/><rect x="168" y="177" width="5" height="5" fill="#fdfff5"/><rect x="173" y="177" width="5" height="5" fill="#d9e6e0"/><rect x="178" y="177" width="5" height="5" fill="#eeebf0"/><rect x="188" y="177" width="5" height="5" fill="#d6d1d1"/><rect x="193" y="177" width="5" height="5" fill="#d5e1d4"/><rect x="198" y="177" width="5" height="5" fill="#f2f7ed"/><rect x="203" y="177" width="5" height="5" fill="#fdfffc"/><rect x="208" y="177" width="5" height="5" fill="#faf0f5"/><rect x="213" y="177" width="5" height="5" fill="#eaf4ed"/><rect x="218" y="177" width="5" height="5" fill="#f0f7f5"/><rect x="223" y="177" width="5" height="5" fill="#e7e0e1"/><rect x="233" y="177" width="5" height="5" fill="#fdfaf7"/><rect x="238" y="177" width="5" height="5" fill="#f9f5f8"/><rect x="243" y="177" width="5" height="5" fill="#f4f3ef"/><rect x="248" y="177" width="5" height="5" fill="#f8f5f2"/><rect x="253" y="177" width="5" height="5" fill="#d4dbdc"/><rect x="8" y="182" width="5" height="5" fill="#bdc3c3"/><rect x="13" y="182" width="5" height="5" fill="#b9b8ba"/><rect x="18" y="182" width="5" height="5" fill="#b0b5af"/><rect x="23" y="182" width="5" height="5" fill="#b6bab9"/><rect x="28" y="182" width="5" height="5" fill="#c8d1cd"/><rect x="33" y="182" width="5" height="5" fill="#a59da5"/><rect x="38" y="182" width="5" height="5" fill="#c9cfcc"/><rect x="43" y="182" width="5" height="5" fill="#c1bfc1"/><rect x="48" y="182" width="5" height="5" fill="#c1c5c6"/><rect x="53" y="182" width="5" height="5" fill="#c2bbc2"/><rect x="58" y="182" width="5" height="5" fill="#d2cfd3"/><rect x="63" y="182" width="5" height="5" fill="#d3cdcd"/><rect x="68" y="182" width="5" height="5" fill="#a7b1b2"/><rect x="73" y="182" width="5" height="5" fill="#ced1d1"/><rect x="78" y="182" width="5" height="5" fill="#cbc3cc"/><rect x="83" y="182" width="5" height="5" fill="#c7c8c5"/><rect x="88" y="182" width="5" height="5" fill="#a3a5a3"/><rect x="93" y="182" width="5" height="5" fill="#bdb3b5"/><rect x="98" y="182" width="5" height="5" fill="#c5c8c2"/><rect x="103" y="182" width="5" height="5" fill="#cbcac2"/><rect x="108" y="182" width="5" height="5" fill="#aeaba8"/><rect x="113" y="182" width="5" height="5" fill="#a8aba9"/><rect x="118" y="182" width="5" height="5" fill="#b5b3b9"/><rect x="123" y="182" width="5" height="5" fill="#c4c7c7"/><rect x="128" y="182" width="5" height="5" fill="#cdd6c9"/><rect x="133" y="182" width="5" height="5" fill="#cccbcc"/><rect x="138" y="182" width="5" height="5" fill="#d9e3dc"/><rect x="143" y="182" width="5" height="5" fill="#c4cdc5"/><rect x="148" y="182" width="5" height="5" fill="#bab7bb"/><rect x="153" y="182" width="5" height="5" fill="#f1efe9"/><rect x="158" y="182" width="5" height="5" fill="#bdbab6"/><rect x="163" y="182" width="5" height="5" fill="#acb2b2"/><rect x="168" y="182" width="5" height="5" fill="#d7d7d2"/><rect x="173" y="182" width="5" height="5" fill="#9ca497"/><rect x="178" y="182" width="5" height="5" fill="#bbc1c2"/><rect x="188" y="182" width="5" height="5" fill="#c8ced2"/><rect x="193" y="182" width="5" height="5" fill="#cbccc9"/><rect x="198" y="182" width="5" height="5" fill="#c4cec5"/><rect x="203" y="182" width="5" height="5" fill="#d7d6d2"/><rect x="208" y="182" width="5" height="5" fill="#9ea8a1"/><rect x="213" y="182" width="5" height="5" fill="#c7c6cf"/><rect x="218" y="182" width="5" height="5" fill="#cac7c9"/><rect x="223" y="182" width="5" height="5" fill="#bbc2bf"/><rect x="228" y="182" width="5" height="5" fill="#eaf1f2"/><rect x="233" y="182" width="5" height="5" fill="#cad1ce"/><rect x="238" y="182" width="5" height="5" fill="#d7d5cd"/><rect x="243" y="182" width="5" height="5" fill="#bebcc8"/><rect x="248" y="182" width="5" height="5" fill="#a2a6a4"/><rect x="253" y="182" width="5" height="5" fill="#c8c8ca"/><rect x="8" y="187" width="5" height="5" fill="#e8f1ea"/><rect x="13" y="187" width="5" height="5" fill="#dfdcdc"/><rect x="18" y="187" width="5" height="5" fill="#e0e0de"/><rect x="23" y="187" width="5" height="5" fill="#e7e5dd"/><rect x="28" y="187" width="5" height="5" fill="#dbdde4"/><rect x="33" y="187" width="5" height="5" fill="#e0dcd4"/><rect x="38" y="187" width="5" height="5" fill="#e1dcde"/><rect x="43" y="187" width="5" height="5" fill="#dfdedc"/><rect x="48" y="187" width="5" height="5" fill="#d6cecf"/><rect x="53" y="187" width="5" height="5" fill="#e2d9da"/><rect x="58" y="187" width="5" height="5" fill="#e8dee8"/><rect x="63" y="187" width="5" height="5" fill="#f6f2f0"/><rect x="68" y="187" width="5" height="5" fill="#f6f8ed"/><rect x="73" y="187" width="5" height="5" fill="#dcdddd"/><rect x="78" y="187" width="5" height="5" fill="#d8d5db"/><rect x="83" y="187" width="5" height="5" fill="#c4b9bb"/><rect x="88" y="187" width="5" height="5" fill="#e4e3e2"/><rect x="93" y="187" width="5" height="5" fill="#cfd8dc"/><rect x="98" y="187" width="5" height="5" fill="#f3efe6"/><rect x="103" y="187" width="5" height="5" fill="#f1e8ee"/><rect x="108" y="187" width="5" height="5" fill="#e6e3db"/><rect x="113" y="187" width="5" height="5" fill="#e4ede2"/><rect x="118" y="187" width="5" height="5" fill="#e2dfdb"/><rect x="123" y="187" width="5" height="5" fill="#d0c8c9"/><rect x="128" y="187" width="5" height="5" fill="#e1dddd"/><rect x="133" y="187" width="5" height="5" fill="#e8eaec"/><rect x="138" y="187" width="5" height="5" fill="#ebefed"/><rect x="143" y="187" width="5" height="5" fill="#d6d4db"/><rect x="148" y="187" width="5" height="5" fill="#e0dbe4"/><rect x="153" y="187" width="5" height="5" fill="#dae1df"/><rect x="158" y="187" width="5" height="5" fill="#ede8e9"/><rect x="163" y="187" width="5" height="5" fill="#d6dad6"/><rect x="168" y="187" width="5" height="5" fill="#e0ddd7"/><rect x="173" y="187" width="5" height="5" fill="#d9dbe0"/><rect x="178" y="187" width="5" height="5" fill="#d7dedd"/><rect x="188" y="187" width="5" height="5" fill="#d5ddd5"/><rect x="193" y="187" width="5" height="5" fill="#d7ded9"/><rect x="198" y="187" width="5" height="5" fill="#f2ecea"/><rect x="203" y="187" width="5" height="5" fill="#ddd2dc"/><rect x="208" y="187" width="5" height="5" fill="#d3d4e0"/><rect x="213" y="187" width="5" height="5" fill="#efe8e7"/><rect x="218" y="187" width="5" height="5" fill="#e2dee0"/><rect x="223" y="187" width="5" height="5" fill="#e2e9e5"/><rect x="233" y="187" width="5" height="5" fill="#e2e3e7"/><rect x="238" y="187" width="5" height="5" fill="#dcddd9"/><rect x="243" y="187" width="5" height="5" fill="#f0edef"/><rect x="248" y="187" width="5" height="5" fill="#d7ddd8"/><rect x="253" y="187" width="5" height="5" fill="#dbdadd"/><rect x="8" y="197" width="5" height="5" fill="#e1dddc"/><rect x="13" y="197" width="5" height="5" fill="#dfdde9"/><rect x="18" y="197" width="5" height="5" fill="#f0f4ea"/><rect x="23" y="197" width="5" height="5" fill="#f7fdf9"/><rect x="28" y="197" width="5" height="5" fill="#f8f9f3"/><rect x="33" y="197" width="5" height="5" fill="#f1f1f4"/><rect x="38" y="197" width="5" height="5" fill="#eff6eb"/><rect x="43" y="197" width="5" height="5" fill="#e1e1e0"/><rect x="48" y="197" width="5" height="5" fill="#e9e8ec"/><rect x="53" y="197" width="5" height="5" fill="#ecf8f1"/><rect x="58" y="197" width="5" height="5" fill="#e2dede"/><rect x="63" y="197" width="5" height="5" fill="#eff5ea"/><rect x="68" y="197" width="5" height="5" fill="#fcf7fc"/><rect x="73" y="197" width="5" height="5" fill="#f9f1f2"/><rect x="78" y="197" width="5" height="5" fill="#dadddb"/><rect x="83" y="197" width="5" height="5" fill="#eff7ef"/><rect x="8" y="202" width="5" height="5" fill="#b6b8b5"/><rect x="13" y="202" width="5" height="5" fill="#b9b9b1"/><rect x="18" y="202" width="5" height="5" fill="#c7cdd1"/><rect x="23" y="202" width="5" height="5" fill="#b4b1b9"/><rect x="28" y="202" width="5" height="5" fill="#c0c1cb"/><rect x="33" y="202" width="5" height="5" fill="#b3aeb5"/><rect x="38" y="202" width="5" height="5" fill="#cec7c5"/><rect x="43" y="202" width="5" height="5" fill="#b2b2bd"/><rect x="48" y="202" width="5" height="5" fill="#bac0b4"/><rect x="53" y="202" width="5" height="5" fill="#c6c4c8"/><rect x="58" y="202" width="5" height="5" fill="#b8babc"/><rect x="63" y="202" width="5" height="5" fill="#c2bebe"/><rect x="68" y="202" width="5" height="5" fill="#d6cbcf"/><rect x="73" y="202" width="5" height="5" fill="#c8cac3"/><rect x="78" y="202" width="5" height="5" fill="#9a979d"/><rect x="83" y="202" width="5" height="5" fill="#cac6c9"/><rect x="8" y="207" width="5" height="5" fill="#e6e4eb"/><rect x="13" y="207" width="5" height="5" fill="#eaece9"/><rect x="18" y="207" width="5" height="5" fill="#dcdee0"/><rect x="23" y="207" width="5" height="5" fill="#d8dadf"/><rect x="28" y="207" width="5" height="5" fill="#cbcacd"/><rect x="33" y="207" width="5" height="5" fill="#b9c3c3"/><rect x="38" y="207" width="5" height="5" fill="#dcdad9"/><rect x="43" y="207" width="5" height="5" fill="#d2d0d5"/><rect x="48" y="207" width="5" height="5" fill="#d7d2cf"/><rect x="53" y="207" width="5" height="5" fill="#e2d9db"/><rect x="58" y="207" width="5" height="5" fill="#d4d5d1"/><rect x="63" y="207" width="5" height="5" fill="#ebe9ef"/><rect x="68" y="207" width="5" height="5" fill="#e1e6e3"/><rect x="73" y="207" width="5" height="5" fill="#e2e0de"/><rect x="78" y="207" width="5" height="5" fill="#dfdde1"/><rect x="83" y="207" width="5" height="5" fill="#e2e1db"/><rect x="8" y="217" width="5" height="5" fill="#dad4d0"/><rect x="13" y="217" width="5" height="5" fill="#dfe0e1"/><rect x="18" y="217" width="5" height="5" fill="#d7d1ce"/><rect x="23" y="217" width="5" height="5" fill="#e8e5de"/><rect x="28" y="217" width="5" height="5" fill="#e5e6ea"/><rect x="33" y="217" width="5" height="5" fill="#dedfdb"/><rect x="38" y="217" width="5" height="5" fill="#e1e4e3"/><rect x="43" y="217" width="5" height="5" fill="#cecad2"/><rect x="48" y="217" width="5" height="5" fill="#dfddd4"/><rect x="53" y="217" width="5" height="5" fill="#e0dbe3"/><rect x="58" y="217" width="5" height="5" fill="#d3dad8"/><rect x="63" y="217" width="5" height="5" fill="#dadde5"/><rect x="68" y="217" width="5" height="5" fill="#dadada"/><rect x="78" y="217" width="5" height="5" fill="#d6d8d3"/><rect x="83" y="217" width="5" height="5" fill="#d4cfc8"/><rect x="88" y="217" width="5" height="5" fill="#ebe6e0"/><rect x="93" y="217" width="5" height="5" fill="#f3e6ee"/><rect x="98" y="217" width="5" height="5" fill="#e6ebe4"/><rect x="103" y="217" width="5" height="5" fill="#dedfde"/><rect x="108" y="217" width="5" height="5" fill="#e0dde3"/><rect x="113" y="217" width="5" height="5" fill="#eaebea"/><rect x="118" y="217" width="5" height="5" fill="#d7d5d5"/><rect x="123" y="217" width="5" height="5" fill="#e0ddda"/><rect x="8" y="222" width="5" height="5" fill="#d4cfc9"/><rect x="13" y="222" width="5" height="5" fill="#b1b0b9"/><rect x="18" y="222" width="5" height="5" fill="#a89ea7"/><rect x="23" y="222" width="5" height="5" fill="#eaeff2"/><rect x="28" y="222" width="5" height="5" fill="#d7d9d3"/><rect x="33" y="222" width="5" height="5" fill="#989fa0"/><rect x="38" y="222" width="5" height="5" fill="#e2e5e4"/><rect x="43" y="222" width="5" height="5" fill="#b6babb"/><rect x="48" y="222" width="5" height="5" fill="#ebeeea"/><rect x="53" y="222" width="5" height="5" fill="#bfbcbe"/><rect x="58" y="222" width="5" height="5" fill="#a1a19f"/><rect x="63" y="222" width="5" height="5" fill="#cdc6ca"/><rect x="68" y="222" width="5" height="5" fill="#d1cfcc"/><rect x="73" y="222" width="5" height="5" fill="#e6e6ea"/><rect x="78" y="222" width="5" height="5" fill="#c9cccb"/><rect x="83" y="222" width="5" height="5" fill="#e3ece3"/><rect x="88" y="222" width="5" height="5" fill="#bcb3bc"/><rect x="93" y="222" width="5" height="5" fill="#b3b7b6"/><rect x="98" y="222" width="5" height="5" fill="#b8bab9"/><rect x="103" y="222" width="5" height="5" fill="#c9c3c7"/><rect x="108" y="222" width="5" height="5" fill="#a69da7"/><rect x="113" y="222" width="5" height="5" fill="#bbb9b3"/><rect x="118" y="222" width="5" height="5" fill="#c4c1c8"/><rect x="123" y="222" width="5" height="5" fill="#d4d4d0"/><rect x="8" y="227" width="5" height="5" fill="#dbd7df"/><rect x="13" y="227" width="5" height="5" fill="#edefea"/><rect x="18" y="227" width="5" height="5" fill="#f2e9ea"/><rect x="23" y="227" width="5" height="5" fill="#e2e7eb"/><rect x="28" y="227" width="5" height="5" fill="#d9e0e2"/><rect x="33" y="227" width="5" height="5" fill="#edeaf1"/><rect x="38" y="227" width="5" height="5" fill="#ecedeb"/><rect x="43" y="227" width="5" height="5" fill="#d5d5d7"/><rect x="48" y="227" width="5" height="5" fill="#e1d9d8"/><rect x="53" y="227" width="5" height="5" fill="#e7ece2"/><rect x="58" y="227" width="5" height="5" fill="#e6e7ee"/><rect x="63" y="227" width="5" height="5" fill="#e8e3e3"/><rect x="68" y="227" width="5" height="5" fill="#e3e4e5"/><rect x="73" y="227" width="5" height="5" fill="#fdf4fa"/><rect x="78" y="227" width="5" height="5" fill="#ced0c7"/><rect x="83" y="227" width="5" height="5" fill="#d6d4d7"/><rect x="88" y="227" width="5" height="5" fill="#eaf1f3"/><rect x="93" y="227" width="5" height="5" fill="#d2ccce"/><rect x="98" y="227" width="5" height="5" fill="#dad9da"/><rect x="103" y="227" width="5" height="5" fill="#ded7e0"/><rect x="108" y="227" width="5" height="5" fill="#e4e5e5"/><rect x="113" y="227" width="5" height="5" fill="#d8dbdc"/><rect x="118" y="227" width="5" height="5" fill="#edf2e6"/><rect x="123" y="227" width="5" height="5" fill="#cac9cb"/><rect x="487" y="290" width="5" height="5" fill="#a9a7af"/><rect x="492" y="290" width="5" height="5" fill="#d0d7d5"/><rect x="497" y="290" width="5" height="5" fill="#b7bfb7"/><rect x="502" y="290" width="5" height="5" fill="#afa9aa"/><rect x="507" y="290" width="5" height="5" fill="#ced5c9"/><rect x="512" y="290" width="5" height="5" fill="#d9dfe4"/><rect x="517" y="290" width="5" height="5" fill="#cecbd4"/><rect x="522" y="290" width="5" height="5" fill="#aebbb2"/><rect x="527" y="290" width="5" height="5" fill="#d6d5d8"/><rect x="532" y="290" width="5" height="5" fill="#dad0d6"/><rect x="537" y="290" width="5" height="5" fill="#e1dde0"/><rect x="542" y="290" width="5" height="5" fill="#d8d8da"/><rect x="547" y="290" width="5" height="5" fill="#dbd7d5"/><rect x="552" y="290" width="5" height="5" fill="#d9d6d4"/><rect x="562" y="290" width="5" height="5" fill="#bebdb6"/><rect x="567" y="290" width="5" height="5" fill="#bbbac0"/><rect x="572" y="290" width="5" height="5" fill="#e3dce7"/><rect x="577" y="290" width="5" height="5" fill="#c4c9cf"/><rect x="582" y="290" width="5" height="5" fill="#d9dfd8"/><rect x="587" y="290" width="5" height="5" fill="#d1d3d0"/><rect x="597" y="290" width="5" height="5" fill="#d2c9cf"/><rect x="602" y="290" width="5" height="5" fill="#e1e1df"/><rect x="607" y="290" width="5" height="5" fill="#dbddd6"/><rect x="612" y="290" width="5" height="5" fill="#d2c8d2"/><rect x="617" y="290" width="5" height="5" fill="#d8dddb"/><rect x="622" y="290" width="5" height="5" fill="#a4a6aa"/><rect x="627" y="290" width="5" height="5" fill="#d7deda"/><rect x="632" y="290" width="5" height="5" fill="#d7d6e2"/><rect x="637" y="290" width="5" height="5" fill="#d9dbdd"/><rect x="642" y="290" width="5" height="5" fill="#e1d4da"/><rect x="647" y="290" width="5" height="5" fill="#d6dbda"/><rect x="657" y="290" width="5" height="5" fill="#bfb6b8"/><rect x="662" y="290" width="5" height="5" fill="#afb7b8"/><rect x="667" y="290" width="5" height="5" fill="#d2d2d3"/><rect x="672" y="290" width="5" height="5" fill="#c8ccce"/><rect x="677" y="290" width="5" height="5" fill="#b0acb3"/><rect x="682" y="290" width="5" height="5" fill="#cccfd5"/><rect x="687" y="290" width="5" height="5" fill="#e2dfe1"/><rect x="692" y="290" width="5" height="5" fill="#e3d9e7"/><rect x="697" y="290" width="5" height="5" fill="#b8bab9"/><rect x="702" y="290" width="5" height="5" fill="#d9dad5"/><rect x="707" y="290" width="5" height="5" fill="#d9d0d0"/><rect x="717" y="290" width="5" height="5" fill="#b5b4b7"/><rect x="722" y="290" width="5" height="5" fill="#aaaaac"/><rect x="727" y="290" width="5" height="5" fill="#c2c6c1"/><rect x="732" y="290" width="5" height="5" fill="#d8d4cc"/><rect x="737" y="290" width="5" height="5" fill="#dbdcdd"/><rect x="742" y="290" width="5" height="5" fill="#d9e5e7"/><rect x="747" y="290" width="5" height="5" fill="#d8d8d2"/><rect x="752" y="290" width="5" height="5" fill="#cfd3d2"/><rect x="757" y="290" width="5" height="5" fill="#dcd1cf"/><rect x="762" y="290" width="5" height="5" fill="#b4ada7"/><rect x="777" y="290" width="5" height="5" fill="#e0d7df"/><rect x="782" y="290" width="5" height="5" fill="#e7e5e2"/><rect x="787" y="290" width="5" height="5" fill="#d9dbd8"/><rect x="792" y="290" width="5" height="5" fill="#d5d1d5"/><rect x="797" y="290" width="5" height="5" fill="#d7d6df"/><rect x="802" y="290" width="5" height="5" fill="#b2afaf"/><rect x="812" y="290" width="5" height="5" fill="#bfbeb5"/><rect x="822" y="290" width="5" height="5" fill="#bbb8b3"/><rect x="827" y="290" width="5" height="5" fill="#c5c9c9"/><rect x="832" y="290" width="5" height="5" fill="#e5e9e1"/><rect x="837" y="290" width="5" height="5" fill="#e8e8e8"/><rect x="842" y="290" width="5" height="5" fill="#dbd8d8"/><rect x="847" y="290" width="5" height="5" fill="#cacad1"/><rect x="852" y="290" width="5" height="5" fill="#deddd8"/><rect x="857" y="290" width="5" height="5" fill="#c6c8bd"/><rect x="862" y="290" width="5" height="5" fill="#ccd0ce"/><rect x="867" y="290" width="5" height="5" fill="#e8e4df"/><rect x="872" y="290" width="5" height="5" fill="#d3ccd3"/><rect x="877" y="290" width="5" height="5" fill="#bab1b1"/><rect x="882" y="290" width="5" height="5" fill="#d7d3ca"/><rect x="887" y="290" width="5" height="5" fill="#d9dae6"/><rect x="892" y="290" width="5" height="5" fill="#e4d9e4"/><rect x="897" y="290" width="5" height="5" fill="#bcb7b2"/><rect x="487" y="295" width="5" height="5" fill="#b3adab"/><rect x="492" y="295" width="5" height="5" fill="#b1acaa"/><rect x="497" y="295" width="5" height="5" fill="#b7afb6"/><rect x="502" y="295" width="5" height="5" fill="#948a8a"/><rect x="507" y="295" width="5" height="5" fill="#88878d"/><rect x="512" y="295" width="5" height="5" fill="#a5a7a2"/><rect x="517" y="295" width="5" height="5" fill="#c2b9bb"/><rect x="522" y="295" width="5" height="5" fill="#969c94"/><rect x="527" y="295" width="5" height="5" fill="#b9b2b3"/><rect x="532" y="295" width="5" height="5" fill="#948c93"/><rect x="537" y="295" width="5" height="5" fill="#aba8b5"/><rect x="542" y="295" width="5" height="5" fill="#aaafb3"/><rect x="547" y="295" width="5" height="5" fill="#a7a3a6"/><rect x="552" y="295" width="5" height="5" fill="#b5b9ae"/><rect x="557" y="295" width="5" height="5" fill="#bbb6b6"/><rect x="562" y="295" width="5" height="5" fill="#9c9899"/><rect x="567" y="295" width="5" height="5" fill="#acaea7"/><rect x="572" y="295" width="5" height="5" fill="#b4b3b3"/><rect x="577" y="295" width="5" height="5" fill="#cdcacb"/><rect x="582" y="295" width="5" height="5" fill="#828a86"/><rect x="587" y="295" width="5" height="5" fill="#c8c9be"/><rect x="592" y="295" width="5" height="5" fill="#818785"/><rect x="597" y="295" width="5" height="5" fill="#96959b"/><rect x="602" y="295" width="5" height="5" fill="#868986"/><rect x="607" y="295" width="5" height="5" fill="#c2c4c6"/><rect x="612" y="295" width="5" height="5" fill="#afb8b7"/><rect x="617" y="295" width="5" height="5" fill="#8d999a"/><rect x="622" y="295" width="5" height="5" fill="#8b978e"/><rect x="627" y="295" width="5" height="5" fill="#a3aba8"/><rect x="632" y="295" width="5" height="5" fill="#a9adaf"/><rect x="637" y="295" width="5" height="5" fill="#acaaab"/><rect x="642" y="295" width="5" height="5" fill="#aea3ab"/><rect x="647" y="295" width="5" height="5" fill="#afa8ad"/><rect x="652" y="295" width="5" height="5" fill="#bcbab3"/><rect x="657" y="295" width="5" height="5" fill="#cbc8cb"/><rect x="662" y="295" width="5" height="5" fill="#a3a5a2"/><rect x="667" y="295" width="5" height="5" fill="#aca4a1"/><rect x="672" y="295" width="5" height="5" fill="#c2cac9"/><rect x="677" y="295" width="5" height="5" fill="#9a98a5"/><rect x="682" y="295" width="5" height="5" fill="#b0b2a8"/><rect x="687" y="295" width="5" height="5" fill="#9ba5a1"/><rect x="692" y="295" width="5" height="5" fill="#b0beb9"/><rect x="697" y="295" width="5" height="5" fill="#aca0ac"/><rect x="702" y="295" width="5" height="5" fill="#8c9992"/><rect x="707" y="295" width="5" height="5" fill="#92959b"/><rect x="717" y="295" width="5" height="5" fill="#a6a4aa"/><rect x="722" y="295" width="5" height="5" fill="#cac8c9"/><rect x="727" y="295" width="5" height="5" fill="#b8babc"/><rect x="732" y="295" width="5" height="5" fill="#9ba29a"/><rect x="737" y="295" width="5" height="5" fill="#aea9ac"/><rect x="742" y="295" width="5" height="5" fill="#a7aaa7"/><rect x="747" y="295" width="5" height="5" fill="#a6a39d"/><rect x="752" y="295" width="5" height="5" fill="#a9b0a3"/><rect x="757" y="295" width="5" height="5" fill="#aca6a7"/><rect x="762" y="295" width="5" height="5" fill="#a7a0a2"/><rect x="767" y="295" width="5" height="5" fill="#bec3b9"/><rect x="777" y="295" width="5" height="5" fill="#b4b2b1"/><rect x="782" y="295" width="5" height="5" fill="#adada8"/><rect x="787" y="295" width="5" height="5" fill="#9e9da8"/><rect x="792" y="295" width="5" height="5" fill="#a3a2a0"/><rect x="797" y="295" width="5" height="5" fill="#adaeab"/><rect x="802" y="295" width="5" height="5" fill="#9e9e9e"/><rect x="812" y="295" width="5" height="5" fill="#9d989c"/><rect x="817" y="295" width="5" height="5" fill="#afbbbb"/><rect x="822" y="295" width="5" height="5" fill="#a39eaa"/><rect x="827" y="295" width="5" height="5" fill="#9c9d97"/><rect x="832" y="295" width="5" height="5" fill="#a0a1a2"/><rect x="837" y="295" width="5" height="5" fill="#b5bab2"/><rect x="842" y="295" width="5" height="5" fill="#9d9a9f"/><rect x="847" y="295" width="5" height="5" fill="#a3a3a8"/><rect x="852" y="295" width="5" height="5" fill="#969c9b"/><rect x="857" y="295" width="5" height="5" fill="#a5a4a4"/><rect x="862" y="295" width="5" height="5" fill="#9c9594"/><rect x="867" y="295" width="5" height="5" fill="#a79aa3"/><rect x="872" y="295" width="5" height="5" fill="#cac0cd"/><rect x="877" y="295" width="5" height="5" fill="#a8a4a6"/><rect x="882" y="295" width="5" height="5" fill="#aba0a6"/><rect x="887" y="295" width="5" height="5" fill="#afb5b4"/><rect x="892" y="295" width="5" height="5" fill="#b5b1b6"/><rect x="897" y="295" width="5" height="5" fill="#b2b2aa"/><rect x="487" y="300" width="5" height="5" fill="#b6b7bb"/><rect x="492" y="300" width="5" height="5" fill="#cad6d1"/><rect x="497" y="300" width="5" height="5" fill="#adadae"/><rect x="502" y="300" width="5" height="5" fill="#a098a5"/><rect x="507" y="300" width="5" height="5" fill="#b4b0b0"/><rect x="512" y="300" width="5" height="5" fill="#b0a6b1"/><rect x="517" y="300" width="5" height="5" fill="#a6a3a6"/><rect x="522" y="300" width="5" height="5" fill="#b1a9b1"/><rect x="527" y="300" width="5" height="5" fill="#b2aaa9"/><rect x="532" y="300" width="5" height="5" fill="#9ca0a1"/><rect x="537" y="300" width="5" height="5" fill="#aeafa6"/><rect x="542" y="300" width="5" height="5" fill="#9c9ea5"/><rect x="547" y="300" width="5" height="5" fill="#bcc1b8"/><rect x="552" y="300" width="5" height="5" fill="#a4a8ae"/><rect x="562" y="300" width="5" height="5" fill="#babab3"/><rect x="567" y="300" width="5" height="5" fill="#c0bfbf"/><rect x="572" y="300" width="5" height="5" fill="#aebbb0"/><rect x="577" y="300" width="5" height="5" fill="#b6b5a7"/><rect x="582" y="300" width="5" height="5" fill="#969c9f"/><rect x="587" y="300" width="5" height="5" fill="#aca9a9"/><rect x="592" y="300" width="5" height="5" fill="#b1a5ab"/><rect x="597" y="300" width="5" height="5" fill="#adb3ba"/><rect x="602" y="300" width="5" height="5" fill="#abb6b1"/><rect x="607" y="300" width="5" height="5" fill="#dad7d0"/><rect x="612" y="300" width="5" height="5" fill="#d3cdc5"/><rect x="617" y="300" width="5" height="5" fill="#9ca4a4"/><rect x="622" y="300" width="5" height="5" fill="#9f9da0"/><rect x="627" y="300" width="5" height="5" fill="#b3bcae"/><rect x="632" y="300" width="5" height="5" fill="#b1b3a7"/><rect x="637" y="300" width="5" height="5" fill="#a7a4a7"/><rect x="642" y="300" width="5" height="5" fill="#bfc1c1"/><rect x="647" y="300" width="5" height="5" fill="#b0aaa6"/><rect x="657" y="300" width="5" height="5" fill="#bab8b4"/><rect x="662" y="300" width="5" height="5" fill="#acb8af"/><rect x="667" y="300" width="5" height="5" fill="#b4a9a9"/><rect x="672" y="300" width="5" height="5" fill="#a8a3a6"/><rect x="677" y="300" width="5" height="5" fill="#b4b3b1"/><rect x="682" y="300" width="5" height="5" fill="#c9cece"/><rect x="687" y="300" width="5" height="5" fill="#adb0a5"/><rect x="692" y="300" width="5" height="5" fill="#a4a0a4"/><rect x="697" y="300" width="5" height="5" fill="#b6b0ac"/><rect x="702" y="300" width="5" height="5" fill="#b7aaaf"/><rect x="707" y="300" width="5" height="5" fill="#bcbbc2"/><rect x="717" y="300" width="5" height="5" fill="#bfb3ba"/><rect x="722" y="300" width="5" height="5" fill="#b0b4b1"/><rect x="727" y="300" width="5" height="5" fill="#b5b5b6"/><rect x="732" y="300" width="5" height="5" fill="#c0b9b5"/><rect x="737" y="300" width="5" height="5" fill="#b0b2a9"/><rect x="742" y="300" width="5" height="5" fill="#a1a2a1"/><rect x="747" y="300" width="5" height="5" fill="#b7b3b5"/><rect x="752" y="300" width="5" height="5" fill="#b7bcc1"/><rect x="757" y="300" width="5" height="5" fill="#ada8a8"/><rect x="762" y="300" width="5" height="5" fill="#a5a2a2"/><rect x="777" y="300" width="5" height="5" fill="#aaadb9"/><rect x="782" y="300" width="5" height="5" fill="#9aa0a2"/><rect x="787" y="300" width="5" height="5" fill="#bfb5b6"/><rect x="792" y="300" width="5" height="5" fill="#b6b9b9"/><rect x="797" y="300" width="5" height="5" fill="#b5b4b4"/><rect x="802" y="300" width="5" height="5" fill="#9899a4"/><rect x="812" y="300" width="5" height="5" fill="#bdb6b8"/><rect x="822" y="300" width="5" height="5" fill="#9ea4ad"/><rect x="827" y="300" width="5" height="5" fill="#aeafb1"/><rect x="832" y="300" width="5" height="5" fill="#a4a1a2"/><rect x="837" y="300" width="5" height="5" fill="#a2a5a9"/><rect x="842" y="300" width="5" height="5" fill="#aaa9ab"/><rect x="847" y="300" width="5" height="5" fill="#999a92"/><rect x="852" y="300" width="5" height="5" fill="#b7aeb9"/><rect x="857" y="300" width="5" height="5" fill="#a6a09d"/><rect x="862" y="300" width="5" height="5" fill="#acb2b3"/><rect x="867" y="300" width="5" height="5" fill="#9d9ca3"/><rect x="872" y="300" width="5" height="5" fill="#adaaa7"/><rect x="877" y="300" width="5" height="5" fill="#b7aeb3"/><rect x="882" y="300" width="5" height="5" fill="#bac2bd"/><rect x="887" y="300" width="5" height="5" fill="#bab4b0"/><rect x="892" y="300" width="5" height="5" fill="#9aa5a1"/><rect x="897" y="300" width="5" height="5" fill="#b7b2ba"/><rect x="582" y="305" width="5" height="5" fill="#cdc9c6"/><rect x="842" y="305" width="5" height="5" fill="#e3e7dc"/><rect x="847" y="305" width="5" height="5" fill="#c9cecf"/><rect x="1573" y="249" width="5" height="5" fill="#ecebe8"/><rect x="1578" y="249" width="5" height="5" fill="#f9eef4"/><rect x="1583" y="249" width="5" height="5" fill="#efe6eb"/><rect x="1598" y="249" width="5" height="5" fill="#f2ebef"/><rect x="1623" y="249" width="5" height="5" fill="#f6f3f6"/><rect x="1628" y="249" width="5" height="5" fill="#eeeeed"/><rect x="1663" y="249" width="5" height="5" fill="#f9fefa"/><rect x="1668" y="249" width="5" height="5" fill="#f4eff3"/><rect x="1693" y="249" width="5" height="5" fill="#e4e7eb"/><rect x="1698" y="249" width="5" height="5" fill="#f6f2ee"/><rect x="1708" y="249" width="5" height="5" fill="#eeedee"/><rect x="1718" y="249" width="5" height="5" fill="#faf3fb"/><rect x="1723" y="249" width="5" height="5" fill="#fef4f8"/><rect x="1733" y="249" width="5" height="5" fill="#f4eef3"/><rect x="1738" y="249" width="5" height="5" fill="#e9e0e5"/><rect x="1763" y="249" width="5" height="5" fill="#f6fcff"/><rect x="1768" y="249" width="5" height="5" fill="#f1efef"/><rect x="1793" y="249" width="5" height="5" fill="#f1ebec"/><rect x="1803" y="249" width="5" height="5" fill="#f4f9f3"/><rect x="1808" y="249" width="5" height="5" fill="#f2f5ee"/><rect x="1833" y="249" width="5" height="5" fill="#f8f3f9"/><rect x="1848" y="249" width="5" height="5" fill="#f6ecf2"/><rect x="1863" y="249" width="5" height="5" fill="#f3eeef"/><rect x="1573" y="254" width="5" height="5" fill="#d5d5ca"/><rect x="1578" y="254" width="5" height="5" fill="#d7dad2"/><rect x="1583" y="254" width="5" height="5" fill="#bab4b7"/><rect x="1588" y="254" width="5" height="5" fill="#cbcacc"/><rect x="1593" y="254" width="5" height="5" fill="#cfd2d8"/><rect x="1598" y="254" width="5" height="5" fill="#cfcecd"/><rect x="1603" y="254" width="5" height="5" fill="#cec9c2"/><rect x="1608" y="254" width="5" height="5" fill="#e0dadc"/><rect x="1613" y="254" width="5" height="5" fill="#c4c7c6"/><rect x="1618" y="254" width="5" height="5" fill="#d4dbd4"/><rect x="1623" y="254" width="5" height="5" fill="#d7ced7"/><rect x="1628" y="254" width="5" height="5" fill="#dad7d9"/><rect x="1633" y="254" width="5" height="5" fill="#d7dcd9"/><rect x="1638" y="254" width="5" height="5" fill="#bdc5bf"/><rect x="1643" y="254" width="5" height="5" fill="#d2d8d2"/><rect x="1648" y="254" width="5" height="5" fill="#c9c3cb"/><rect x="1653" y="254" width="5" height="5" fill="#c4c2cd"/><rect x="1658" y="254" width="5" height="5" fill="#d0d9d9"/><rect x="1663" y="254" width="5" height="5" fill="#c3bcbd"/><rect x="1668" y="254" width="5" height="5" fill="#c5c7ca"/><rect x="1673" y="254" width="5" height="5" fill="#d6cecc"/><rect x="1678" y="254" width="5" height="5" fill="#dfdad9"/><rect x="1683" y="254" width="5" height="5" fill="#c6c8c1"/><rect x="1688" y="254" width="5" height="5" fill="#eef1f2"/><rect x="1693" y="254" width="5" height="5" fill="#dbe1d9"/><rect x="1698" y="254" width="5" height="5" fill="#d0d0d2"/><rect x="1703" y="254" width="5" height="5" fill="#e6e1e1"/><rect x="1708" y="254" width="5" height="5" fill="#c2bec3"/><rect x="1713" y="254" width="5" height="5" fill="#d0d8d2"/><rect x="1718" y="254" width="5" height="5" fill="#c7c9cd"/><rect x="1723" y="254" width="5" height="5" fill="#c7c5c2"/><rect x="1728" y="254" width="5" height="5" fill="#e1e7e2"/><rect x="1733" y="254" width="5" height="5" fill="#e2d7e3"/><rect x="1738" y="254" width="5" height="5" fill="#eae6e6"/><rect x="1743" y="254" width="5" height="5" fill="#d2d6cc"/><rect x="1748" y="254" width="5" height="5" fill="#dfdedb"/><rect x="1753" y="254" width="5" height="5" fill="#c3c3bb"/><rect x="1758" y="254" width="5" height="5" fill="#d9d6d7"/><rect x="1763" y="254" width="5" height="5" fill="#cdc6cd"/><rect x="1768" y="254" width="5" height="5" fill="#d9dfd7"/><rect x="1778" y="254" width="5" height="5" fill="#d2d1d0"/><rect x="1783" y="254" width="5" height="5" fill="#d1c7ce"/><rect x="1788" y="254" width="5" height="5" fill="#cbcbc8"/><rect x="1793" y="254" width="5" height="5" fill="#c3c4c9"/><rect x="1803" y="254" width="5" height="5" fill="#c8c7cb"/><rect x="1808" y="254" width="5" height="5" fill="#c5c5bf"/><rect x="1813" y="254" width="5" height="5" fill="#cdc8cd"/><rect x="1818" y="254" width="5" height="5" fill="#dae5e1"/><rect x="1823" y="254" width="5" height="5" fill="#c2c2c1"/><rect x="1828" y="254" width="5" height="5" fill="#cdd0cf"/><rect x="1833" y="254" width="5" height="5" fill="#ccc5c6"/><rect x="1838" y="254" width="5" height="5" fill="#cbcbd5"/><rect x="1843" y="254" width="5" height="5" fill="#dbd4d8"/><rect x="1848" y="254" width="5" height="5" fill="#d3d4d2"/><rect x="1853" y="254" width="5" height="5" fill="#c6c1c1"/><rect x="1858" y="254" width="5" height="5" fill="#dedadd"/><rect x="1863" y="254" width="5" height="5" fill="#c2b7b8"/><rect x="1868" y="254" width="5" height="5" fill="#ddd4d7"/><rect x="1573" y="259" width="5" height="5" fill="#faf7f3"/><rect x="1578" y="259" width="5" height="5" fill="#eaecec"/><rect x="1583" y="259" width="5" height="5" fill="#f0f2f0"/><rect x="1588" y="259" width="5" height="5" fill="#f5f5f5"/><rect x="1593" y="259" width="5" height="5" fill="#f0f0e6"/><rect x="1598" y="259" width="5" height="5" fill="#ecebef"/><rect x="1603" y="259" width="5" height="5" fill="#e7e5eb"/><rect x="1608" y="259" width="5" height="5" fill="#e9e7e8"/><rect x="1613" y="259" width="5" height="5" fill="#eaeceb"/><rect x="1618" y="259" width="5" height="5" fill="#f1eef1"/><rect x="1623" y="259" width="5" height="5" fill="#f3f1f6"/><rect x="1628" y="259" width="5" height="5" fill="#f1f7f6"/><rect x="1633" y="259" width="5" height="5" fill="#eaf0ec"/><rect x="1638" y="259" width="5" height="5" fill="#dddfe0"/><rect x="1643" y="259" width="5" height="5" fill="#f0eee8"/><rect x="1648" y="259" width="5" height="5" fill="#eceae6"/><rect x="1653" y="259" width="5" height="5" fill="#f0eff4"/><rect x="1658" y="259" width="5" height="5" fill="#f3f9f5"/><rect x="1663" y="259" width="5" height="5" fill="#e8f0ea"/><rect x="1668" y="259" width="5" height="5" fill="#f5efef"/><rect x="1673" y="259" width="5" height="5" fill="#efe5e6"/><rect x="1678" y="259" width="5" height="5" fill="#e7e6ef"/><rect x="1683" y="259" width="5" height="5" fill="#ede9e6"/><rect x="1693" y="259" width="5" height="5" fill="#eee9e5"/><rect x="1698" y="259" width="5" height="5" fill="#f2eeed"/><rect x="1703" y="259" width="5" height="5" fill="#e9eae8"/><rect x="1708" y="259" width="5" height="5" fill="#f2f5f1"/><rect x="1713" y="259" width="5" height="5" fill="#e7efe7"/><rect x="1718" y="259" width="5" height="5" fill="#ebefed"/><rect x="1723" y="259" width="5" height="5" fill="#f2f1eb"/><rect x="1728" y="259" width="5" height="5" fill="#eff3f6"/><rect x="1733" y="259" width="5" height="5" fill="#f3f4f9"/><rect x="1738" y="259" width="5" height="5" fill="#e4e7e6"/><rect x="1743" y="259" width="5" height="5" fill="#faeff1"/><rect x="1748" y="259" width="5" height="5" fill="#f1f0e9"/><rect x="1753" y="259" width="5" height="5" fill="#e5e6ea"/><rect x="1758" y="259" width="5" height="5" fill="#faf2f2"/><rect x="1763" y="259" width="5" height="5" fill="#ebe8ed"/><rect x="1768" y="259" width="5" height="5" fill="#fefdfa"/><rect x="1778" y="259" width="5" height="5" fill="#e7e1ea"/><rect x="1783" y="259" width="5" height="5" fill="#f0f1f3"/><rect x="1788" y="259" width="5" height="5" fill="#f9f4f8"/><rect x="1793" y="259" width="5" height="5" fill="#eadfe2"/><rect x="1803" y="259" width="5" height="5" fill="#faf8fb"/><rect x="1808" y="259" width="5" height="5" fill="#e9edf2"/><rect x="1813" y="259" width="5" height="5" fill="#e8eaed"/><rect x="1818" y="259" width="5" height="5" fill="#e7e6ef"/><rect x="1823" y="259" width="5" height="5" fill="#dbd6de"/><rect x="1828" y="259" width="5" height="5" fill="#eceaec"/><rect x="1833" y="259" width="5" height="5" fill="#e2e7eb"/><rect x="1838" y="259" width="5" height="5" fill="#eef4e9"/><rect x="1843" y="259" width="5" height="5" fill="#e4e3e8"/><rect x="1848" y="259" width="5" height="5" fill="#f2f7f6"/><rect x="1853" y="259" width="5" height="5" fill="#ebeeee"/><rect x="1858" y="259" width="5" height="5" fill="#f2e9ec"/><rect x="1863" y="259" width="5" height="5" fill="#f2ebea"/><rect x="1868" y="259" width="5" height="5" fill="#f0ecf4"/><rect x="1573" y="264" width="5" height="5" fill="#f4eef8"/><rect x="1578" y="264" width="5" height="5" fill="#efecf0"/><rect x="1583" y="264" width="5" height="5" fill="#f8f1ed"/><rect x="1593" y="264" width="5" height="5" fill="#f3f1f7"/><rect x="1598" y="264" width="5" height="5" fill="#f7fdf5"/><rect x="1618" y="264" width="5" height="5" fill="#f4faf6"/><rect x="1623" y="264" width="5" height="5" fill="#f2f1f1"/><rect x="1638" y="264" width="5" height="5" fill="#f2f6ef"/><rect x="1653" y="264" width="5" height="5" fill="#f4f0f7"/><rect x="1573" y="269" width="5" height="5" fill="#cdc7cf"/><rect x="1578" y="269" width="5" height="5" fill="#cac8c8"/><rect x="1583" y="269" width="5" height="5" fill="#c7c5c1"/><rect x="1588" y="269" width="5" height="5" fill="#d9dbd3"/><rect x="1593" y="269" width="5" height="5" fill="#c6c6c9"/><rect x="1598" y="269" width="5" height="5" fill="#c7cdcc"/><rect x="1603" y="269" width="5" height="5" fill="#d7d1d5"/><rect x="1608" y="269" width="5" height="5" fill="#c3bdbf"/><rect x="1613" y="269" width="5" height="5" fill="#d9ced9"/><rect x="1618" y="269" width="5" height="5" fill="#c9cbc9"/><rect x="1623" y="269" width="5" height="5" fill="#ccc9cc"/><rect x="1628" y="269" width="5" height="5" fill="#c3cccb"/><rect x="1633" y="269" width="5" height="5" fill="#e8e2e3"/><rect x="1638" y="269" width="5" height="5" fill="#c6c2cc"/><rect x="1643" y="269" width="5" height="5" fill="#cdd4ca"/><rect x="1648" y="269" width="5" height="5" fill="#dddedd"/><rect x="1653" y="269" width="5" height="5" fill="#bbb6bb"/><rect x="1658" y="269" width="5" height="5" fill="#d9e0e0"/><rect x="1573" y="274" width="5" height="5" fill="#f5f5eb"/><rect x="1578" y="274" width="5" height="5" fill="#eaedea"/><rect x="1583" y="274" width="5" height="5" fill="#f0f5f1"/><rect x="1588" y="274" width="5" height="5" fill="#f1eeed"/><rect x="1593" y="274" width="5" height="5" fill="#f5ecf4"/><rect x="1598" y="274" width="5" height="5" fill="#f0f2ec"/><rect x="1603" y="274" width="5" height="5" fill="#f8faf2"/><rect x="1608" y="274" width="5" height="5" fill="#e7e9e7"/><rect x="1613" y="274" width="5" height="5" fill="#f1f0ec"/><rect x="1618" y="274" width="5" height="5" fill="#ecedea"/><rect x="1623" y="274" width="5" height="5" fill="#ebebe9"/><rect x="1628" y="274" width="5" height="5" fill="#eaedf2"/><rect x="1633" y="274" width="5" height="5" fill="#eee6eb"/><rect x="1638" y="274" width="5" height="5" fill="#f3f3ee"/><rect x="1643" y="274" width="5" height="5" fill="#edeeec"/><rect x="1648" y="274" width="5" height="5" fill="#f2eee7"/><rect x="1653" y="274" width="5" height="5" fill="#e9eee7"/><rect x="1658" y="274" width="5" height="5" fill="#f6f3f4"/></svg>
</body>
</html>
